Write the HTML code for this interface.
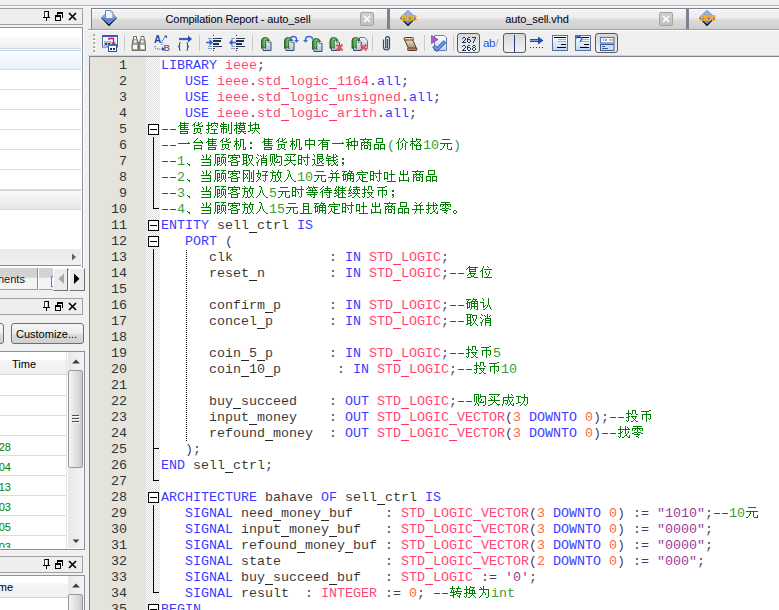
<!DOCTYPE html><html><head><meta charset="utf-8"><style>
html,body{margin:0;padding:0}
body{width:779px;height:610px;overflow:hidden;position:relative;background:#f0f0f0;font-family:"Liberation Sans",sans-serif}
.abs{position:absolute;box-sizing:content-box}
svg.abs{overflow:visible}
.hdr{border:1px solid #a0a0a0;background:#eeeeee}
.lbl{font-size:11px;line-height:13px;white-space:pre}
.ln{position:absolute;font-family:"Liberation Mono",monospace;font-size:13.333px;line-height:16px;white-space:pre;color:#000;margin-top:1px;opacity:0.78}
.ln b{font-weight:normal}
.cm{color:#008000}
.num{color:#000}
.tab{border-top:1px solid #7c8290;border-left:1px solid #7c8290;background:linear-gradient(#ffffff 0,#ffffff 1px,#f4f4f4 1px,#ececec 9px,#dcdcdc 10px,#cfcfcf 20px)}
.closeb{border:1px solid #a4a4a4;border-radius:2px;background:linear-gradient(#d0d0d0,#c0c0c0)}
.btn3{border-right:1px solid #707070;border-bottom:1px solid #707070;border-top:1px solid #fff;border-left:1px solid #fff;background:#ececec}
.pbtn{border:1px solid #707070;border-radius:3px;background:linear-gradient(#f4f4f4 0,#ececec 50%,#dcdcdc 51%,#d0d0d0)}
.thumb{border:1px solid #9a9a9a;border-radius:2px;background:linear-gradient(90deg,#f4f4f4,#dadada 70%,#c8c8c8)}
.pressed{border:1px solid #5a5a5a;border-radius:3px;background:linear-gradient(#d8d8d8,#f2f2f2)}
</style></head><body><div class="abs" style="left:0;top:5px;width:779px;height:1px;background:#b0b0b0"></div><div class="abs" style="left:0;top:6px;width:779px;height:1px;background:#f8f8f8"></div><div class="abs hdr" style="left:-1px;top:8px;width:82px;height:15px"></div><svg class="abs" style="left:42px;top:9px" width="40" height="14" shape-rendering="crispEdges">
<g fill="#000" transform="translate(2,2)">
<rect x="0" y="0" width="1" height="6" fill="#3a4048"/><rect x="1" y="0" width="4" height="1"/><rect x="4" y="0" width="1" height="6"/><rect x="3" y="1" width="1" height="5" fill="#c4c4c4"/><rect x="1" y="1" width="2" height="5" fill="#fff"/><rect x="13" y="3" width="1" height="1"/>
<rect x="-1" y="6" width="7" height="1"/><rect x="2" y="7" width="1" height="3"/>
<rect x="13" y="1" width="6" height="2"/><rect x="18" y="1" width="1" height="6"/>
<rect x="11" y="4" width="6" height="2"/><rect x="11" y="4" width="1" height="6"/><rect x="16" y="4" width="1" height="6"/><rect x="11" y="9" width="6" height="1"/>
</g>
<path d="M27 4l7 7M34 4l-7 7" stroke="#000" stroke-width="1.6" fill="none" shape-rendering="geometricPrecision"/>
</svg><div class="abs" style="left:-1px;top:27px;width:82px;height:241px;border:1px solid #8a909c;background:#fff"></div><div class="abs" style="left:83px;top:27px;width:1px;height:241px;background:#fff"></div><div class="abs" style="left:0;top:37px;width:81px;height:11px;background:linear-gradient(#fafbfc,#eef0f2)"></div><div class="abs" style="left:0;top:48px;width:81px;height:1px;background:#d6d6d6"></div><div class="abs" style="left:0;top:50px;width:81px;height:1px;background:#b4d4fa"></div><div class="abs" style="left:0;top:51px;width:81px;height:18px;background:linear-gradient(#fbfdff,#e8f1fd)"></div><div class="abs" style="left:0;top:69px;width:81px;height:1px;background:#dcdcdc"></div><div class="abs" style="left:0;top:89px;width:81px;height:1px;background:#dcdcdc"></div><div class="abs" style="left:0;top:109px;width:81px;height:1px;background:#dcdcdc"></div><div class="abs" style="left:0;top:129px;width:81px;height:1px;background:#dcdcdc"></div><div class="abs" style="left:0;top:149px;width:81px;height:1px;background:#dcdcdc"></div><div class="abs" style="left:0;top:169px;width:81px;height:1px;background:#dcdcdc"></div><div class="abs" style="left:0;top:189px;width:81px;height:2px;background:#d8d8d8"></div><div class="abs" style="left:0;top:191px;width:81px;height:18px;background:linear-gradient(#f8f9f9,#e6e6e6)"></div><div class="abs" style="left:0;top:209px;width:81px;height:1px;background:#d8d8d8"></div><div class="abs" style="left:0;top:249px;width:81px;height:16px;background:linear-gradient(#eaeaea,#f0f0f0)"></div><div class="abs" style="left:0;top:265px;width:81px;height:1px;background:#8a909c"></div><svg class="abs" style="left:70px;top:252px" width="8" height="10"><path d="M2 1.5L6 5L2 8.5z" fill="#606060"/></svg><div class="abs" style="left:-1px;top:268px;width:38px;height:21px;border:1px solid #a0a4ac;border-top:0;background:linear-gradient(#d0d0d0 0,#d4d4d4 45%,#f2f2f2 46%,#f4f4f4)"></div><div class="abs lbl" style="left:-2px;top:273px;color:#101020">nents</div><div class="abs" style="left:37px;top:268px;width:1px;height:22px;background:#8a8e96"></div><div class="abs" style="left:38px;top:268px;width:1px;height:22px;background:#fafafa"></div><div class="abs" style="left:39px;top:268px;width:14px;height:21px;border-bottom:1px solid #a0a4ac;background:linear-gradient(#d0d0d0 0,#d4d4d4 45%,#f2f2f2 46%,#f4f4f4)"></div><svg class="abs" style="left:50px;top:275px" width="4" height="13" shape-rendering="crispEdges"><path d="M1 1h3v1H2v9h2v1H1z" fill="#5a88d8"/></svg><div class="abs btn3" style="left:53px;top:268px;width:13px;height:21px"></div><svg class="abs" style="left:56px;top:271px" width="10" height="16"><path d="M8 2.5V13L2.5 7.8z" fill="#a8a8a8"/></svg><div class="abs btn3" style="left:69px;top:268px;width:14px;height:21px"></div><svg class="abs" style="left:72px;top:271px" width="10" height="16"><path d="M2 2.5V13L7.5 7.8z" fill="#000"/></svg><div class="abs hdr" style="left:-1px;top:298px;width:82px;height:15px"></div><svg class="abs" style="left:42px;top:299px" width="40" height="14" shape-rendering="crispEdges">
<g fill="#000" transform="translate(2,2)">
<rect x="0" y="0" width="1" height="6" fill="#3a4048"/><rect x="1" y="0" width="4" height="1"/><rect x="4" y="0" width="1" height="6"/><rect x="3" y="1" width="1" height="5" fill="#c4c4c4"/><rect x="1" y="1" width="2" height="5" fill="#fff"/><rect x="13" y="3" width="1" height="1"/>
<rect x="-1" y="6" width="7" height="1"/><rect x="2" y="7" width="1" height="3"/>
<rect x="13" y="1" width="6" height="2"/><rect x="18" y="1" width="1" height="6"/>
<rect x="11" y="4" width="6" height="2"/><rect x="11" y="4" width="1" height="6"/><rect x="16" y="4" width="1" height="6"/><rect x="11" y="9" width="6" height="1"/>
</g>
<path d="M27 4l7 7M34 4l-7 7" stroke="#000" stroke-width="1.6" fill="none" shape-rendering="geometricPrecision"/>
</svg><div class="abs pbtn" style="left:-20px;top:323px;width:22px;height:19px"></div><div class="abs pbtn" style="left:11px;top:323px;width:71px;height:19px"></div><div class="abs lbl" style="left:16px;top:328px;color:#000">Customize...</div><div class="abs" style="left:-1px;top:351px;width:84px;height:197px;border:1px solid #8a909c;background:#fff"></div><div class="abs" style="left:0;top:352px;width:68px;height:22px;background:linear-gradient(#ffffff 0,#ffffff 35%,#f4f6f8 36%,#eef0f2)"></div><div class="abs" style="left:0;top:374px;width:68px;height:1px;background:#d6d6d6"></div><div class="abs lbl" style="left:12px;top:358px;color:#000">Time</div><div class="abs" style="left:0;top:395px;width:66px;height:1px;background:#dcdcdc"></div><div class="abs" style="left:0;top:415px;width:66px;height:1px;background:#dcdcdc"></div><div class="abs" style="left:0;top:435px;width:66px;height:1px;background:#dcdcdc"></div><div class="abs" style="left:0;top:455px;width:66px;height:1px;background:#dcdcdc"></div><div class="abs" style="left:0;top:475px;width:66px;height:1px;background:#dcdcdc"></div><div class="abs" style="left:0;top:495px;width:66px;height:1px;background:#dcdcdc"></div><div class="abs" style="left:0;top:515px;width:66px;height:1px;background:#dcdcdc"></div><div class="abs" style="left:0;top:535px;width:66px;height:1px;background:#dcdcdc"></div><div class="abs" style="left:66px;top:352px;width:1px;height:197px;background:#e4e4e4"></div><div class="abs lbl" style="left:-7px;top:441px;color:#008000;width:18px;text-align:right">28</div><div class="abs lbl" style="left:-7px;top:461px;color:#008000;width:18px;text-align:right">04</div><div class="abs lbl" style="left:-7px;top:481px;color:#008000;width:18px;text-align:right">13</div><div class="abs lbl" style="left:-7px;top:501px;color:#008000;width:18px;text-align:right">03</div><div class="abs lbl" style="left:-7px;top:521px;color:#008000;width:18px;text-align:right">05</div><div class="abs lbl" style="left:-7px;top:541px;color:#008000;width:18px;text-align:right;clip-path:inset(0 0 6px 0)">03</div><div class="abs" style="left:68px;top:352px;width:16px;height:196px;background:linear-gradient(90deg,#e8e8e8,#f4f4f4)"></div><svg class="abs" style="left:68px;top:355px" width="16" height="12"><path d="M4 8.5L8 4.5L12 8.5z" fill="#404040"/></svg><svg class="abs" style="left:68px;top:536px" width="16" height="12"><path d="M4.5 3.5L8 7L11.5 3.5z" fill="#404040"/></svg><div class="abs thumb" style="left:68px;top:370px;width:13px;height:96px"></div><svg class="abs" style="left:71px;top:413px" width="10" height="11" shape-rendering="crispEdges"><path d="M1 2h7v1H1zM1 5h7v1H1zM1 8h7v1H1z" fill="#505050"/><path d="M2 3h7v1H2zM2 6h7v1H2zM2 9h7v1H2z" fill="#fafafa"/></svg><div class="abs hdr" style="left:-1px;top:556px;width:82px;height:15px"></div><svg class="abs" style="left:42px;top:557px" width="40" height="14" shape-rendering="crispEdges">
<g fill="#000" transform="translate(2,2)">
<rect x="0" y="0" width="1" height="6" fill="#3a4048"/><rect x="1" y="0" width="4" height="1"/><rect x="4" y="0" width="1" height="6"/><rect x="3" y="1" width="1" height="5" fill="#c4c4c4"/><rect x="1" y="1" width="2" height="5" fill="#fff"/><rect x="13" y="3" width="1" height="1"/>
<rect x="-1" y="6" width="7" height="1"/><rect x="2" y="7" width="1" height="3"/>
<rect x="13" y="1" width="6" height="2"/><rect x="18" y="1" width="1" height="6"/>
<rect x="11" y="4" width="6" height="2"/><rect x="11" y="4" width="1" height="6"/><rect x="16" y="4" width="1" height="6"/><rect x="11" y="9" width="6" height="1"/>
</g>
<path d="M27 4l7 7M34 4l-7 7" stroke="#000" stroke-width="1.6" fill="none" shape-rendering="geometricPrecision"/>
</svg><div class="abs" style="left:-1px;top:575px;width:84px;height:40px;border:1px solid #8a909c;background:#fff"></div><div class="abs" style="left:0;top:576px;width:68px;height:21px;background:linear-gradient(#ffffff 0,#ffffff 35%,#f4f6f8 36%,#eef0f2)"></div><div class="abs" style="left:0;top:597px;width:68px;height:1px;background:#d6d6d6"></div><div class="abs lbl" style="left:-11px;top:581px;color:#000">Time</div><div class="abs" style="left:68px;top:576px;width:16px;height:40px;background:linear-gradient(90deg,#e8e8e8,#f4f4f4)"></div><svg class="abs" style="left:68px;top:579px" width="16" height="12"><path d="M4 8.5L8 4.5L12 8.5z" fill="#404040"/></svg><div class="abs thumb" style="left:68px;top:594px;width:13px;height:30px"></div><div class="abs" style="left:88px;top:29px;width:691px;height:1px;background:#a0a0a0"></div><div class="abs" style="left:88px;top:30px;width:691px;height:1px;background:#fff"></div><div class="abs tab" style="left:91px;top:8px;width:296px;height:20px"></div><div class="abs" style="left:387px;top:8px;width:2px;height:21px;background:#7c8290"></div><div class="abs lbl" style="left:88px;top:13px;width:300px;text-align:center;color:#000018;letter-spacing:-0.1px">Compilation Report - auto_sell</div><div class="abs closeb" style="left:360px;top:12px;width:12px;height:12px"></div><svg class="abs" style="left:360px;top:12px" width="14" height="14"><path d="M4 4l6 6M10 4l-6 6" stroke="#fff" stroke-width="1.7"/></svg><svg class="abs" style="left:101px;top:10px" width="17" height="17">
<path d="M0 8L8 16.3L16 8z" fill="#000"/>
<path d="M8 0L16 7.5L8 14.5L0 7.5z" fill="#5a88dc"/>
<path d="M8 0L16 7.5L0 7.5z" fill="#88aae8"/><path d="M4.5 0.5h5.5l2 2v6h-7.5z" fill="#eef2fc" stroke="#7088b0" stroke-width="1"/><path d="M10 0.5v2h2" fill="#fff" stroke="#7088b0" stroke-width="0.7"/></svg><div class="abs tab" style="left:389px;top:8px;width:297px;height:20px"></div><div class="abs" style="left:686px;top:8px;width:2px;height:21px;background:#7c8290"></div><div class="abs lbl" style="left:387px;top:13px;width:300px;text-align:center;color:#000018;letter-spacing:-0.1px">auto_sell.vhd</div><div class="abs closeb" style="left:659px;top:12px;width:12px;height:12px"></div><svg class="abs" style="left:659px;top:12px" width="14" height="14"><path d="M4 4l6 6M10 4l-6 6" stroke="#fff" stroke-width="1.7"/></svg><svg class="abs" style="left:400px;top:10px" width="17" height="17">
<path d="M0 8L8 16.3L16 8z" fill="#000"/>
<path d="M8 0L16 7.5L8 14.5L0 7.5z" fill="#5a88dc"/>
<path d="M8 0L16 7.5L0 7.5z" fill="#88aae8"/><text x="8.6" y="11.2" font-family="Liberation Sans" font-size="11" font-weight="bold" fill="#ffb000" text-anchor="middle" letter-spacing="-1.1">abc</text></svg><div class="abs tab" style="left:688px;top:8px;width:112px;height:20px"></div><div class="abs" style="left:800px;top:8px;width:2px;height:21px;background:#7c8290"></div><div class="abs lbl" style="left:-150px;top:13px;width:300px;text-align:center;color:#000018;letter-spacing:-0.1px"></div><svg class="abs" style="left:699px;top:10px" width="17" height="17">
<path d="M0 8L8 16.3L16 8z" fill="#000"/>
<path d="M8 0L16 7.5L8 14.5L0 7.5z" fill="#5a88dc"/>
<path d="M8 0L16 7.5L0 7.5z" fill="#88aae8"/><text x="8.6" y="11.2" font-family="Liberation Sans" font-size="11" font-weight="bold" fill="#ffb000" text-anchor="middle" letter-spacing="-1.1">abc</text></svg><div class="abs" style="left:88px;top:31px;width:691px;height:24px;background:#efefef"></div><div class="abs" style="left:88px;top:55px;width:691px;height:1px;background:#d4d4d4"></div><svg class="abs" style="left:92px;top:33px" width="5" height="20" shape-rendering="crispEdges"><rect x="1" y="1" width="2" height="2" fill="#9c9c9c"/><rect x="1" y="1" width="1" height="1" fill="#d4d4d4"/><rect x="2" y="3" width="2" height="1" fill="#fff"/><rect x="1" y="5" width="2" height="2" fill="#9c9c9c"/><rect x="1" y="5" width="1" height="1" fill="#d4d4d4"/><rect x="2" y="7" width="2" height="1" fill="#fff"/><rect x="1" y="9" width="2" height="2" fill="#9c9c9c"/><rect x="1" y="9" width="1" height="1" fill="#d4d4d4"/><rect x="2" y="11" width="2" height="1" fill="#fff"/><rect x="1" y="13" width="2" height="2" fill="#9c9c9c"/><rect x="1" y="13" width="1" height="1" fill="#d4d4d4"/><rect x="2" y="15" width="2" height="1" fill="#fff"/><rect x="1" y="17" width="2" height="2" fill="#9c9c9c"/><rect x="1" y="17" width="1" height="1" fill="#d4d4d4"/><rect x="2" y="19" width="2" height="1" fill="#fff"/></svg><svg class="abs" style="left:102px;top:35px" width="17" height="17"><rect x="0.5" y="0.5" width="15" height="11.5" fill="#f2f6fc" stroke="#4a68b0"/><rect x="0" y="0" width="16" height="2" fill="#3a58c0"/><rect x="2" y="6" width="7" height="5" fill="#b8b8b8"/><rect x="3" y="8" width="2" height="2" fill="#404040"/><rect x="6" y="8" width="2" height="2" fill="#404040"/><path d="M7 5V3.5H11.5V8" stroke="#d01848" stroke-width="1.3" fill="none"/><path d="M9 7.5h5l-2.5 3z" fill="#d01848"/><rect x="6.5" y="9.5" width="8" height="7" fill="#fff" stroke="#2a4a90"/><rect x="6" y="9" width="9" height="2" fill="#3a68d0"/><rect x="8" y="13" width="2" height="2" fill="#203050"/><rect x="11" y="13" width="2" height="2" fill="#203050"/></svg><div class="abs" style="left:124px;top:35px;width:1px;height:16px;background:#cacaca"></div><svg class="abs" style="left:131px;top:35px" width="17" height="17"><g fill="#a4a49c" stroke="#5a5a52" stroke-width="0.8"><path d="M2.5 1.5h3v2.5l1 1v3l1 1v6.5h-6.5v-6.5l0.5-1v-3l1-1z"/><path d="M10 1.5h3v2.5l1 1v3l0.5 1v6.5h-6.5v-6.5l1-1v-3l1-1z"/></g><g fill="#fcfcf8"><rect x="3" y="2" width="2" height="2"/><rect x="10.5" y="2" width="2" height="2"/><rect x="2" y="10" width="4" height="4"/><rect x="9.5" y="10" width="4" height="4"/><rect x="3" y="5.5" width="2.5" height="2"/><rect x="10" y="5.5" width="2.5" height="2"/></g><rect x="7" y="7" width="2" height="2" fill="#707068"/></svg><svg class="abs" style="left:154px;top:35px" width="17" height="17"><text x="0" y="8" font-family="Liberation Sans" font-weight="bold" font-size="10" fill="#1a48a8">A</text><text x="9.5" y="16" font-family="Liberation Sans" font-weight="bold" font-size="9" fill="#707070">B</text><path d="M1 11Q1 14 4 14H8" stroke="#2050c8" stroke-width="1.1" stroke-dasharray="1 1" fill="none"/><path d="M8 12l3 2l-3 2z" fill="#2050c8"/><path d="M8 10L8 6L11 2" stroke="#2050c8" stroke-width="1.1" stroke-dasharray="1 1" fill="none"/><path d="M10 0.5h3v3z" fill="#2050c8"/></svg><svg class="abs" style="left:177px;top:35px" width="17" height="17"><path d="M2 4h10" stroke="#3a60d0" stroke-width="2.2"/><path d="M11 0.5l4 3.5l-4 3.5z" fill="#2a48b8"/><path d="M3.5 7.5q-1 0-1 1.2v2l-1 0.8l1 0.8v2q0 1.2 1 1.2M9.5 7.5q1 0 1 1.2v2l1 0.8l-1 0.8v2q0 1.2-1 1.2" stroke="#3a4a68" stroke-width="1.1" fill="none"/></svg><div class="abs" style="left:199px;top:35px;width:1px;height:16px;background:#cacaca"></div><svg class="abs" style="left:206px;top:35px" width="17" height="17"><path d="M7 3.5h9M7 11.5h9M7 13.5h2" stroke="#2a3a58" stroke-width="1"/><path d="M7 6h8M7 9h6" stroke="#203048" stroke-width="2"/><path d="M2 3.5h4M2 11.5h4M2 13.5h4" stroke="#90a0c0" stroke-width="1"/><rect x="7" y="0" width="1" height="1" fill="#2a3a58"/><rect x="7" y="15" width="1" height="1" fill="#2a3a58"/><path d="M0 7.5h4.5" stroke="#3060d0" stroke-width="1.5"/><path d="M7 7.5l-3.5-3.5v7z" fill="#3060d0"/></svg><svg class="abs" style="left:229px;top:35px" width="17" height="17"><path d="M7 3.5h9M7 11.5h9M7 13.5h2" stroke="#2a3a58" stroke-width="1"/><path d="M7 6h8M7 9h6" stroke="#203048" stroke-width="2"/><path d="M2 3.5h4M2 11.5h4M2 13.5h4" stroke="#90a0c0" stroke-width="1"/><rect x="7" y="0" width="1" height="1" fill="#2a3a58"/><rect x="7" y="15" width="1" height="1" fill="#2a3a58"/><path d="M7 7.5H2.5" stroke="#3060d0" stroke-width="1.5"/><path d="M0 7.5l3.5-3.5v7z" fill="#3060d0"/></svg><div class="abs" style="left:252px;top:35px;width:1px;height:16px;background:#cacaca"></div><svg width="0" height="0" style="position:absolute"><defs><linearGradient id="gdoc" x1="0" y1="0" x2="0" y2="1"><stop offset="0" stop-color="#f4f8ff"/><stop offset="1" stop-color="#aebedc"/></linearGradient><linearGradient id="ggrn" x1="0" y1="0" x2="1" y2="0"><stop offset="0" stop-color="#2a7a2a"/><stop offset="0.5" stop-color="#8ad08a"/><stop offset="1" stop-color="#2a7a2a"/></linearGradient></defs></svg><svg class="abs" style="left:258px;top:35px" width="17" height="17"><g transform="translate(0.5,0)"><path d="M4.5 4.5H9.5L12.5 7.5V15.5H4.5Z" fill="url(#gdoc)" stroke="#3a4a68" stroke-width="1"/><path d="M9.5 4.5V7.5H12.5" fill="#fff" stroke="#3a4a68" stroke-width="0.6"/><path d="M3 13.5V6Q3 2.5 6.5 2.5Q10 2.5 11 5.5L9.5 6Q8.5 4.8 7.2 5.2V13.5L5.2 11.5Z" fill="url(#ggrn)" stroke="#1e5a1e" stroke-width="0.9"/></g></svg><svg class="abs" style="left:281px;top:35px" width="17" height="17"><g transform="translate(0.5,0)"><path d="M4.5 4.5H9.5L12.5 7.5V15.5H4.5Z" fill="url(#gdoc)" stroke="#3a4a68" stroke-width="1"/><path d="M9.5 4.5V7.5H12.5" fill="#fff" stroke="#3a4a68" stroke-width="0.6"/><path d="M3 13.5V6Q3 2.5 6.5 2.5Q10 2.5 11 5.5L9.5 6Q8.5 4.8 7.2 5.2V13.5L5.2 11.5Z" fill="url(#ggrn)" stroke="#1e5a1e" stroke-width="0.9"/></g><path d="M9 5.5Q9 1.5 12.5 1.5Q16 1.5 15.5 5" stroke="#3a6ad8" stroke-width="1.5" fill="none"/><path d="M13 5h5l-2.5 2.8z" fill="#3a6ad8"/></svg><svg class="abs" style="left:304px;top:35px" width="17" height="17"><g transform="translate(5.5,1)"><path d="M4.5 4.5H9.5L12.5 7.5V15.5H4.5Z" fill="url(#gdoc)" stroke="#3a4a68" stroke-width="1"/><path d="M9.5 4.5V7.5H12.5" fill="#fff" stroke="#3a4a68" stroke-width="0.6"/><path d="M3 13.5V6Q3 2.5 6.5 2.5Q10 2.5 11 5.5L9.5 6Q8.5 4.8 7.2 5.2V13.5L5.2 11.5Z" fill="url(#ggrn)" stroke="#1e5a1e" stroke-width="0.9"/></g><path d="M8.5 4.5Q8.5 1.5 5 1.5Q1.5 1.5 1.5 5" stroke="#3a6ad8" stroke-width="1.5" fill="none"/><path d="M-1 5h5l-2.5 2.8z" fill="#3a6ad8"/></svg><svg class="abs" style="left:327px;top:35px" width="17" height="17"><g transform="translate(0,0)"><path d="M4.5 4.5H9.5L12.5 7.5V15.5H4.5Z" fill="url(#gdoc)" stroke="#3a4a68" stroke-width="1"/><path d="M9.5 4.5V7.5H12.5" fill="#fff" stroke="#3a4a68" stroke-width="0.6"/><path d="M3 13.5V6Q3 2.5 6.5 2.5Q10 2.5 11 5.5L9.5 6Q8.5 4.8 7.2 5.2V13.5L5.2 11.5Z" fill="url(#ggrn)" stroke="#1e5a1e" stroke-width="0.9"/></g><g transform="translate(0,0)"><path d="M9.5 9.5l6 6M15.5 9.5l-6 6" stroke="#f05050" stroke-width="2.2"/></g></svg><svg class="abs" style="left:350px;top:35px" width="17" height="17"><g transform="translate(5,-2)"><path d="M4.5 4.5H9.5L12.5 7.5V15.5H4.5Z" fill="url(#gdoc)" stroke="#6a7a98" stroke-width="1"/></g><g transform="translate(-1,0)"><path d="M4.5 4.5H9.5L12.5 7.5V15.5H4.5Z" fill="url(#gdoc)" stroke="#3a4a68" stroke-width="1"/><path d="M9.5 4.5V7.5H12.5" fill="#fff" stroke="#3a4a68" stroke-width="0.6"/><path d="M3 13.5V6Q3 2.5 6.5 2.5Q10 2.5 11 5.5L9.5 6Q8.5 4.8 7.2 5.2V13.5L5.2 11.5Z" fill="url(#ggrn)" stroke="#1e5a1e" stroke-width="0.9"/></g><g transform="translate(1,0)"><path d="M9.5 9.5l6 6M15.5 9.5l-6 6" stroke="#f05050" stroke-width="2.2"/></g></svg><div class="abs" style="left:372px;top:35px;width:1px;height:16px;background:#cacaca"></div><svg class="abs" style="left:379px;top:35px" width="17" height="17"><path d="M4.5 4.5V12A3 3 0 0 0 10.5 12V3.5A1.9 1.9 0 0 0 6.7 3.5V12A0.9 0.9 0 0 0 8.5 12V4" stroke="#284a70" stroke-width="1.2" fill="none"/></svg><svg width="0" height="0" style="position:absolute"><defs><linearGradient id="gscr" x1="0" y1="0" x2="0" y2="1"><stop offset="0" stop-color="#efe6cc"/><stop offset="1" stop-color="#a08e70"/></linearGradient></defs></svg><svg class="abs" style="left:402px;top:36px" width="17" height="17"><path d="M2.5 3.5L10.5 3.5L14.5 12.5H6.5Z" fill="url(#gscr)" stroke="#6a3020" stroke-width="1"/><rect x="2" y="1.5" width="9.5" height="2.5" rx="1.2" fill="#e8dcc0" stroke="#6a3020" stroke-width="1"/><rect x="5.5" y="12" width="9.5" height="2.5" rx="1.2" fill="#a89070" stroke="#6a3020" stroke-width="1"/></svg><div class="abs" style="left:424px;top:35px;width:1px;height:16px;background:#cacaca"></div><svg class="abs" style="left:431px;top:35px" width="17" height="17"><path d="M3.5 0.5H13L15.5 3V15.5H3.5Z" fill="url(#gdoc2)" stroke="#6a80a8" stroke-width="1"/><path d="M0.5 0.5L7 4.5L0.5 8.5Z" fill="#c050d0" stroke="#404878" stroke-width="0.6"/><path d="M2.5 11L6 14.5L14 6.5" stroke="#284a98" stroke-width="3.6" fill="none"/><path d="M2.5 11L6 14.5L14 6.5" stroke="#6a9af0" stroke-width="2.2" fill="none"/></svg><div class="abs" style="left:453px;top:35px;width:1px;height:16px;background:#cacaca"></div><div class="abs pressed" style="left:457px;top:33px;width:21px;height:18px"></div><svg class="abs" style="left:0;top:0" width="779" height="60" shape-rendering="crispEdges"><path d="M463 37h1v1h-1zM464 37h1v1h-1zM462 38h1v1h-1zM465 38h1v1h-1zM465 39h1v1h-1zM464 40h1v1h-1zM463 41h1v1h-1zM462 42h1v1h-1zM463 42h1v1h-1zM464 42h1v1h-1zM465 42h1v1h-1zM468 37h1v1h-1zM469 37h1v1h-1zM467 38h1v1h-1zM467 39h1v1h-1zM468 39h1v1h-1zM469 39h1v1h-1zM467 40h1v1h-1zM470 40h1v1h-1zM467 41h1v1h-1zM470 41h1v1h-1zM468 42h1v1h-1zM469 42h1v1h-1zM472 37h1v1h-1zM473 37h1v1h-1zM474 37h1v1h-1zM475 37h1v1h-1zM475 38h1v1h-1zM474 39h1v1h-1zM474 40h1v1h-1zM473 41h1v1h-1zM473 42h1v1h-1zM463 45h1v1h-1zM464 45h1v1h-1zM462 46h1v1h-1zM465 46h1v1h-1zM465 47h1v1h-1zM464 48h1v1h-1zM463 49h1v1h-1zM462 50h1v1h-1zM463 50h1v1h-1zM464 50h1v1h-1zM465 50h1v1h-1zM468 45h1v1h-1zM469 45h1v1h-1zM467 46h1v1h-1zM467 47h1v1h-1zM468 47h1v1h-1zM469 47h1v1h-1zM467 48h1v1h-1zM470 48h1v1h-1zM467 49h1v1h-1zM470 49h1v1h-1zM468 50h1v1h-1zM469 50h1v1h-1zM473 45h1v1h-1zM474 45h1v1h-1zM472 46h1v1h-1zM475 46h1v1h-1zM473 47h1v1h-1zM474 47h1v1h-1zM472 48h1v1h-1zM475 48h1v1h-1zM472 49h1v1h-1zM475 49h1v1h-1zM473 50h1v1h-1zM474 50h1v1h-1z" fill="#18386a"/></svg><div class="abs" style="left:483px;top:37px;font:11.5px 'Liberation Sans';color:#3050d0;letter-spacing:-0.3px">ab<span style="color:#a0a8b0">/</span></div><div class="abs pressed" style="left:503px;top:33px;width:21px;height:18px"></div><div class="abs" style="left:514px;top:35px;width:1px;height:17px;background:#204080"></div><svg class="abs" style="left:528px;top:35px" width="17" height="17"><path d="M2 5.5h9" stroke="#2a48b8" stroke-width="3"/><path d="M2 5.5h9" stroke="#7aa0f0" stroke-width="1"/><path d="M10 1.5l5.5 4l-5.5 4z" fill="#2a48b8"/><path d="M2 12.5h13" stroke="#203a68" stroke-dasharray="1 2" stroke-width="1.2"/></svg><svg width="0" height="0" style="position:absolute"><defs><linearGradient id="gdoc2" x1="0" y1="0" x2="0" y2="1"><stop offset="0" stop-color="#ffffff"/><stop offset="1" stop-color="#c4d4f0"/></linearGradient></defs></svg><svg class="abs" style="left:552px;top:35px" width="17" height="17"><rect x="0.5" y="0.5" width="15" height="15" fill="url(#gdoc2)" stroke="#5a7098"/><path d="M2 2.5h3M5 2.5h9M9 12.5h5M5 15.5h0" stroke="#000" stroke-width="1"/><path d="M9 9.5h5M5 12.5h9" stroke="#000" stroke-width="1"/><path d="M6 4.5h8M6 6.5h8" stroke="#a8b0a8" stroke-width="1"/></svg><svg class="abs" style="left:575px;top:35px" width="17" height="17"><rect x="0.5" y="0.5" width="15" height="15" fill="url(#gdoc2)" stroke="#5a7098"/><path d="M2 2.5h3M5 2.5h9M9 12.5h5M5 15.5h0" stroke="#000" stroke-width="1"/><path d="M9 9.5h5M5 12.5h9" stroke="#000" stroke-width="1"/><path d="M6 4.5h8M6 6.5h8" stroke="#a8b0a8" stroke-width="1"/><path d="M1.5 2.5Q4 0.5 6 2.5Q7.5 4.5 5 7" stroke="#3a68d0" stroke-width="1.4" fill="none"/><path d="M0 1l3.5 0.2l-2 3z" fill="#3a68d0"/></svg><div class="abs pressed" style="left:595px;top:33px;width:21px;height:18px"></div><svg class="abs" style="left:600px;top:37px" width="17" height="17"><rect x="0.5" y="7.5" width="13.5" height="6" fill="#d0ddf4" stroke="#3a5a98"/><rect x="0.5" y="0.5" width="13.5" height="5.5" fill="#fff" stroke="#4a78d0" stroke-width="1.2"/><path d="M3 3h1M5 3h2" stroke="#203050" stroke-width="1.2"/><path d="M9 3h4" stroke="#f08a10" stroke-width="1.3"/><path d="M2 9.5h3M2 11.5h6M2 13.5h9" stroke="#405c88" stroke-width="1"/></svg><div class="abs" style="left:89px;top:56px;width:700px;height:1px;background:#7c8290"></div><div class="abs" style="left:89px;top:56px;width:1px;height:560px;background:#7c8290"></div><div class="abs" style="left:90px;top:57px;width:56px;height:560px;background:#e4e3dc"></div><svg class="abs" style="left:146px;top:57px" width="14" height="553" shape-rendering="crispEdges"><defs><pattern id="chk" width="2" height="2" patternUnits="userSpaceOnUse"><rect width="2" height="2" fill="#fff"/><rect x="1" y="0" width="1" height="1" fill="#dcdcdc"/><rect x="0" y="1" width="1" height="1" fill="#dcdcdc"/></pattern></defs><rect width="14" height="553" fill="url(#chk)"/></svg><div class="abs" style="left:160px;top:57px;width:619px;height:553px;background:#fff"></div><svg class="abs" style="left:0;top:0" width="779" height="610" shape-rendering="crispEdges"><rect x="148.5" y="124.5" width="10" height="10" fill="#fff" stroke="#000"/><path d="M150 129.5h7" stroke="#000"/><path d="M153.5 137V209" stroke="#000"/><path d="M153 208.5h6" stroke="#000"/><rect x="148.5" y="220.5" width="10" height="10" fill="#fff" stroke="#000"/><path d="M150 225.5h7" stroke="#000"/><rect x="148.5" y="236.5" width="10" height="10" fill="#fff" stroke="#000"/><path d="M150 241.5h7" stroke="#000"/><path d="M153.5 249V481" stroke="#000"/><path d="M153 448.5h6" stroke="#000"/><path d="M153 480.5h6" stroke="#000"/><rect x="148.5" y="492.5" width="10" height="10" fill="#fff" stroke="#000"/><path d="M150 497.5h7" stroke="#000"/><path d="M153.5 505V593" stroke="#000"/><path d="M153 592.5h6" stroke="#000"/><rect x="148.5" y="604.5" width="10" height="10" fill="#fff" stroke="#000"/><path d="M150 609.5h7" stroke="#000"/><path d="M186.5 250V441" stroke="#000" stroke-dasharray="1 1"/></svg><div class="ln num" style="top:57px;left:119px">1</div><div class="ln num" style="top:73px;left:119px">2</div><div class="ln num" style="top:89px;left:119px">3</div><div class="ln num" style="top:105px;left:119px">4</div><div class="ln num" style="top:121px;left:119px">5</div><div class="ln num" style="top:137px;left:119px">6</div><div class="ln num" style="top:153px;left:119px">7</div><div class="ln num" style="top:169px;left:119px">8</div><div class="ln num" style="top:185px;left:119px">9</div><div class="ln num" style="top:201px;left:111px">10</div><div class="ln num" style="top:217px;left:111px">11</div><div class="ln num" style="top:233px;left:111px">12</div><div class="ln num" style="top:249px;left:111px">13</div><div class="ln num" style="top:265px;left:111px">14</div><div class="ln num" style="top:281px;left:111px">15</div><div class="ln num" style="top:297px;left:111px">16</div><div class="ln num" style="top:313px;left:111px">17</div><div class="ln num" style="top:329px;left:111px">18</div><div class="ln num" style="top:345px;left:111px">19</div><div class="ln num" style="top:361px;left:111px">20</div><div class="ln num" style="top:377px;left:111px">21</div><div class="ln num" style="top:393px;left:111px">22</div><div class="ln num" style="top:409px;left:111px">23</div><div class="ln num" style="top:425px;left:111px">24</div><div class="ln num" style="top:441px;left:111px">25</div><div class="ln num" style="top:457px;left:111px">26</div><div class="ln num" style="top:473px;left:111px">27</div><div class="ln num" style="top:489px;left:111px">28</div><div class="ln num" style="top:505px;left:111px">29</div><div class="ln num" style="top:521px;left:111px">30</div><div class="ln num" style="top:537px;left:111px">31</div><div class="ln num" style="top:553px;left:111px">32</div><div class="ln num" style="top:569px;left:111px">33</div><div class="ln num" style="top:585px;left:111px">34</div><div class="ln num" style="top:601px;left:111px">35</div><div class="ln" style="top:57px;left:161px"><b style="color:#0000ff">LIBRARY</b> <b style="color:#ff1050">ieee</b><b style="color:#200030">;</b></div><div class="ln" style="top:73px;left:161px">   <b style="color:#0000ff">USE</b> <b style="color:#ff1050">ieee</b><b style="color:#200030">.</b><b style="color:#ff1050">std logic 1164</b><b style="color:#200030">.</b><b style="color:#0000ff">all</b><b style="color:#200030">;</b></div><div class="ln" style="top:89px;left:161px">   <b style="color:#0000ff">USE</b> <b style="color:#ff1050">ieee</b><b style="color:#200030">.</b><b style="color:#ff1050">std logic unsigned</b><b style="color:#200030">.</b><b style="color:#0000ff">all</b><b style="color:#200030">;</b></div><div class="ln" style="top:105px;left:161px">   <b style="color:#0000ff">USE</b> <b style="color:#ff1050">ieee</b><b style="color:#200030">.</b><b style="color:#ff1050">std logic arith</b><b style="color:#200030">.</b><b style="color:#0000ff">all</b><b style="color:#200030">;</b></div><div class="ln cm" style="top:121px;left:161px">  </div><div class="ln cm" style="top:137px;left:161px">  </div><div class="ln cm" style="top:137px;left:387px">(</div><div class="ln cm" style="top:137px;left:423px">10</div><div class="ln cm" style="top:137px;left:453px">)</div><div class="ln cm" style="top:153px;left:161px">  1</div><div class="ln cm" style="top:169px;left:161px">  2</div><div class="ln cm" style="top:169px;left:297px">10</div><div class="ln cm" style="top:185px;left:161px">  3</div><div class="ln cm" style="top:185px;left:269px">5</div><div class="ln cm" style="top:201px;left:161px">  4</div><div class="ln cm" style="top:201px;left:269px">15</div><div class="ln" style="top:217px;left:161px"><b style="color:#0000ff">ENTITY</b> <b style="color:#000000">sell ctrl</b> <b style="color:#0000ff">IS</b></div><div class="ln" style="top:233px;left:161px">   <b style="color:#0000ff">PORT</b> <b style="color:#200030">(</b></div><div class="ln" style="top:249px;left:161px">      <b style="color:#000000">clk</b>            <b style="color:#200030">:</b> <b style="color:#0000ff">IN</b> <b style="color:#ff1050">STD LOGIC</b><b style="color:#200030">;</b></div><div class="ln" style="top:265px;left:161px">      <b style="color:#000000">reset n</b>        <b style="color:#200030">:</b> <b style="color:#0000ff">IN</b> <b style="color:#ff1050">STD LOGIC</b><b style="color:#200030">;</b></div><div class="ln cm" style="top:265px;left:449px">  </div><div class="ln" style="top:297px;left:161px">      <b style="color:#000000">confirm p</b>      <b style="color:#200030">:</b> <b style="color:#0000ff">IN</b> <b style="color:#ff1050">STD LOGIC</b><b style="color:#200030">;</b></div><div class="ln cm" style="top:297px;left:449px">  </div><div class="ln" style="top:313px;left:161px">      <b style="color:#000000">concel p</b>       <b style="color:#200030">:</b> <b style="color:#0000ff">IN</b> <b style="color:#ff1050">STD LOGIC</b><b style="color:#200030">;</b></div><div class="ln cm" style="top:313px;left:449px">  </div><div class="ln" style="top:345px;left:161px">      <b style="color:#000000">coin 5 p</b>       <b style="color:#200030">:</b> <b style="color:#0000ff">IN</b> <b style="color:#ff1050">STD LOGIC</b><b style="color:#200030">;</b></div><div class="ln cm" style="top:345px;left:449px">  </div><div class="ln cm" style="top:345px;left:493px">5</div><div class="ln" style="top:361px;left:161px">      <b style="color:#000000">coin 10 p</b>       <b style="color:#200030">:</b> <b style="color:#0000ff">IN</b> <b style="color:#ff1050">STD LOGIC</b><b style="color:#200030">;</b></div><div class="ln cm" style="top:361px;left:457px">  </div><div class="ln cm" style="top:361px;left:501px">10</div><div class="ln" style="top:393px;left:161px">      <b style="color:#000000">buy succeed</b>    <b style="color:#200030">:</b> <b style="color:#0000ff">OUT</b> <b style="color:#ff1050">STD LOGIC</b><b style="color:#200030">;</b></div><div class="ln cm" style="top:393px;left:457px">  </div><div class="ln" style="top:409px;left:161px">      <b style="color:#000000">input money</b>    <b style="color:#200030">:</b> <b style="color:#0000ff">OUT</b> <b style="color:#ff1050">STD LOGIC VECTOR</b><b style="color:#200030">(</b><b style="color:#ff4000">3</b> <b style="color:#0000ff">DOWNTO</b> <b style="color:#ff4000">0</b><b style="color:#200030">)</b><b style="color:#200030">;</b></div><div class="ln cm" style="top:409px;left:609px">  </div><div class="ln" style="top:425px;left:161px">      <b style="color:#000000">refound money</b>  <b style="color:#200030">:</b> <b style="color:#0000ff">OUT</b> <b style="color:#ff1050">STD LOGIC VECTOR</b><b style="color:#200030">(</b><b style="color:#ff4000">3</b> <b style="color:#0000ff">DOWNTO</b> <b style="color:#ff4000">0</b><b style="color:#200030">)</b></div><div class="ln cm" style="top:425px;left:601px">  </div><div class="ln" style="top:441px;left:161px">   <b style="color:#200030">)</b><b style="color:#200030">;</b></div><div class="ln" style="top:457px;left:161px"><b style="color:#0000ff">END</b> <b style="color:#000000">sell ctrl</b><b style="color:#200030">;</b></div><div class="ln" style="top:489px;left:161px"><b style="color:#0000ff">ARCHITECTURE</b> <b style="color:#000000">bahave</b> <b style="color:#0000ff">OF</b> <b style="color:#000000">sell ctrl</b> <b style="color:#0000ff">IS</b></div><div class="ln" style="top:505px;left:161px">   <b style="color:#0000ff">SIGNAL</b> <b style="color:#000000">need money buf</b>    <b style="color:#200030">:</b> <b style="color:#ff1050">STD LOGIC VECTOR</b><b style="color:#200030">(</b><b style="color:#ff4000">3</b> <b style="color:#0000ff">DOWNTO</b> <b style="color:#ff4000">0</b><b style="color:#200030">)</b> <b style="color:#200030">:</b><b style="color:#200030">=</b> <b style="color:#800080">&quot;1010&quot;</b><b style="color:#200030">;</b></div><div class="ln cm" style="top:505px;left:713px">  10</div><div class="ln" style="top:521px;left:161px">   <b style="color:#0000ff">SIGNAL</b> <b style="color:#000000">input money buf</b>   <b style="color:#200030">:</b> <b style="color:#ff1050">STD LOGIC VECTOR</b><b style="color:#200030">(</b><b style="color:#ff4000">3</b> <b style="color:#0000ff">DOWNTO</b> <b style="color:#ff4000">0</b><b style="color:#200030">)</b> <b style="color:#200030">:</b><b style="color:#200030">=</b> <b style="color:#800080">&quot;0000&quot;</b><b style="color:#200030">;</b></div><div class="ln" style="top:537px;left:161px">   <b style="color:#0000ff">SIGNAL</b> <b style="color:#000000">refound money buf</b> <b style="color:#200030">:</b> <b style="color:#ff1050">STD LOGIC VECTOR</b><b style="color:#200030">(</b><b style="color:#ff4000">3</b> <b style="color:#0000ff">DOWNTO</b> <b style="color:#ff4000">0</b><b style="color:#200030">)</b> <b style="color:#200030">:</b><b style="color:#200030">=</b> <b style="color:#800080">&quot;0000&quot;</b><b style="color:#200030">;</b></div><div class="ln" style="top:553px;left:161px">   <b style="color:#0000ff">SIGNAL</b> <b style="color:#000000">state</b>             <b style="color:#200030">:</b> <b style="color:#ff1050">STD LOGIC VECTOR</b><b style="color:#200030">(</b><b style="color:#ff4000">2</b> <b style="color:#0000ff">DOWNTO</b> <b style="color:#ff4000">0</b><b style="color:#200030">)</b> <b style="color:#200030">:</b><b style="color:#200030">=</b> <b style="color:#800080">&quot;000&quot;</b><b style="color:#200030">;</b></div><div class="ln" style="top:569px;left:161px">   <b style="color:#0000ff">SIGNAL</b> <b style="color:#000000">buy succeed buf</b>   <b style="color:#200030">:</b> <b style="color:#ff1050">STD LOGIC</b> <b style="color:#200030">:</b><b style="color:#200030">=</b> <b style="color:#800080">&#x27;0&#x27;</b><b style="color:#200030">;</b></div><div class="ln" style="top:585px;left:161px">   <b style="color:#0000ff">SIGNAL</b> <b style="color:#000000">result</b>  <b style="color:#200030">:</b> <b style="color:#ff1050">INTEGER</b> <b style="color:#200030">:</b><b style="color:#200030">=</b> <b style="color:#ff4000">0</b><b style="color:#200030">;</b> </div><div class="ln cm" style="top:585px;left:433px">  </div><div class="ln cm" style="top:585px;left:491px">int</div><div class="ln" style="top:601px;left:161px"><b style="color:#0000ff">BEGIN</b></div><svg class="abs" style="left:0;top:0" width="779" height="610" fill="#008000" shape-rendering="crispEdges"><defs><path id="g3001" d="M3 11h1v1h-1zM4 12h2v1h-2zM5 13h1v1h-1z"/><path id="g3002" d="M4 10h2v1h-2zM3 11h1v1h-1zM6 11h1v1h-1zM3 12h1v1h-1zM6 12h1v1h-1zM4 13h2v1h-2z"/><path id="g4e00" d="M10 6h1v1h-1zM0 7h12v1h-12z"/><path id="g4e14" d="M3 3h6v1h-6zM3 4h1v1h-1zM8 4h1v1h-1zM3 5h1v1h-1zM8 5h1v1h-1zM3 6h6v1h-6zM3 7h1v1h-1zM8 7h1v1h-1zM3 8h1v1h-1zM8 8h1v1h-1zM3 9h6v1h-6zM3 10h1v1h-1zM8 10h1v1h-1zM3 11h1v1h-1zM8 11h1v1h-1zM3 12h1v1h-1zM8 12h1v1h-1zM0 13h12v1h-12z"/><path id="g4e2d" d="M5 2h1v1h-1zM5 3h1v1h-1zM1 4h10v1h-10zM1 5h1v1h-1zM5 5h1v1h-1zM10 5h1v1h-1zM1 6h1v1h-1zM5 6h1v1h-1zM10 6h1v1h-1zM1 7h1v1h-1zM5 7h1v1h-1zM10 7h1v1h-1zM1 8h10v1h-10zM1 9h1v1h-1zM5 9h1v1h-1zM10 9h1v1h-1zM5 10h1v1h-1zM5 11h1v1h-1zM5 12h1v1h-1zM5 13h1v1h-1z"/><path id="g4e3a" d="M5 2h1v1h-1zM2 3h1v1h-1zM5 3h1v1h-1zM3 4h1v1h-1zM5 4h1v1h-1zM1 5h10v1h-10zM5 6h1v1h-1zM10 6h1v1h-1zM5 7h1v1h-1zM10 7h1v1h-1zM5 8h2v1h-2zM10 8h1v1h-1zM4 9h1v1h-1zM7 9h1v1h-1zM10 9h1v1h-1zM4 10h1v1h-1zM7 10h1v1h-1zM10 10h1v1h-1zM3 11h1v1h-1zM10 11h1v1h-1zM2 12h1v1h-1zM10 12h1v1h-1zM1 13h1v1h-1zM8 13h2v1h-2z"/><path id="g4e70" d="M1 2h11v1h-11zM10 3h1v1h-1zM3 4h1v1h-1zM6 4h1v1h-1zM9 4h1v1h-1zM4 5h1v1h-1zM6 5h1v1h-1zM2 6h1v1h-1zM6 6h1v1h-1zM3 7h1v1h-1zM6 7h1v1h-1zM0 8h12v1h-12zM6 9h1v1h-1zM5 10h1v1h-1zM7 10h1v1h-1zM4 11h1v1h-1zM8 11h1v1h-1zM2 12h2v1h-2zM9 12h3v1h-3zM0 13h2v1h-2zM10 13h1v1h-1z"/><path id="g4ef7" d="M3 2h1v1h-1zM7 2h1v1h-1zM3 3h1v1h-1zM7 3h1v1h-1zM2 4h1v1h-1zM6 4h1v1h-1zM8 4h1v1h-1zM2 5h1v1h-1zM5 5h1v1h-1zM9 5h1v1h-1zM1 6h2v1h-2zM4 6h1v1h-1zM10 6h2v1h-2zM0 7h1v1h-1zM2 7h1v1h-1zM6 7h1v1h-1zM9 7h1v1h-1zM2 8h1v1h-1zM6 8h1v1h-1zM9 8h1v1h-1zM2 9h1v1h-1zM6 9h1v1h-1zM9 9h1v1h-1zM2 10h1v1h-1zM6 10h1v1h-1zM9 10h1v1h-1zM2 11h1v1h-1zM6 11h1v1h-1zM9 11h1v1h-1zM2 12h1v1h-1zM5 12h1v1h-1zM9 12h1v1h-1zM2 13h1v1h-1zM4 13h1v1h-1zM9 13h1v1h-1z"/><path id="g4f4d" d="M3 2h1v1h-1zM7 2h1v1h-1zM3 3h1v1h-1zM8 3h1v1h-1zM2 4h1v1h-1zM2 5h1v1h-1zM4 5h8v1h-8zM1 6h2v1h-2zM0 7h1v1h-1zM2 7h1v1h-1zM5 7h1v1h-1zM9 7h1v1h-1zM2 8h1v1h-1zM5 8h1v1h-1zM9 8h1v1h-1zM2 9h1v1h-1zM6 9h1v1h-1zM9 9h1v1h-1zM2 10h1v1h-1zM6 10h1v1h-1zM8 10h1v1h-1zM2 11h1v1h-1zM8 11h1v1h-1zM2 12h1v1h-1zM7 12h1v1h-1zM2 13h1v1h-1zM4 13h8v1h-8z"/><path id="g5143" d="M2 3h8v1h-8zM0 7h12v1h-12zM4 8h1v1h-1zM7 8h1v1h-1zM4 9h1v1h-1zM7 9h1v1h-1zM3 10h1v1h-1zM7 10h1v1h-1zM3 11h1v1h-1zM7 11h1v1h-1zM11 11h1v1h-1zM2 12h1v1h-1zM7 12h1v1h-1zM11 12h1v1h-1zM0 13h2v1h-2zM8 13h4v1h-4z"/><path id="g5165" d="M3 2h2v1h-2zM5 3h1v1h-1zM5 4h1v1h-1zM5 5h1v1h-1zM4 6h1v1h-1zM6 6h1v1h-1zM4 7h1v1h-1zM6 7h1v1h-1zM4 8h1v1h-1zM6 8h1v1h-1zM3 9h1v1h-1zM7 9h1v1h-1zM3 10h1v1h-1zM7 10h1v1h-1zM2 11h1v1h-1zM8 11h1v1h-1zM1 12h1v1h-1zM9 12h1v1h-1zM0 13h1v1h-1zM10 13h2v1h-2z"/><path id="g51fa" d="M5 2h1v1h-1zM2 3h1v1h-1zM5 3h1v1h-1zM9 3h1v1h-1zM2 4h1v1h-1zM5 4h1v1h-1zM9 4h1v1h-1zM2 5h1v1h-1zM5 5h1v1h-1zM9 5h1v1h-1zM2 6h8v1h-8zM5 7h1v1h-1zM5 8h1v1h-1zM1 9h1v1h-1zM5 9h1v1h-1zM10 9h1v1h-1zM1 10h1v1h-1zM5 10h1v1h-1zM10 10h1v1h-1zM1 11h1v1h-1zM5 11h1v1h-1zM10 11h1v1h-1zM1 12h10v1h-10zM1 13h1v1h-1zM10 13h1v1h-1z"/><path id="g521a" d="M1 2h7v1h-7zM11 2h1v1h-1zM1 3h1v1h-1zM7 3h1v1h-1zM11 3h1v1h-1zM1 4h1v1h-1zM7 4h1v1h-1zM9 4h1v1h-1zM11 4h1v1h-1zM1 5h2v1h-2zM5 5h1v1h-1zM7 5h1v1h-1zM9 5h1v1h-1zM11 5h1v1h-1zM1 6h1v1h-1zM3 6h1v1h-1zM5 6h1v1h-1zM7 6h1v1h-1zM9 6h1v1h-1zM11 6h1v1h-1zM1 7h1v1h-1zM4 7h1v1h-1zM7 7h1v1h-1zM9 7h1v1h-1zM11 7h1v1h-1zM1 8h1v1h-1zM4 8h1v1h-1zM7 8h1v1h-1zM9 8h1v1h-1zM11 8h1v1h-1zM1 9h1v1h-1zM3 9h1v1h-1zM5 9h1v1h-1zM7 9h1v1h-1zM9 9h1v1h-1zM11 9h1v1h-1zM1 10h2v1h-2zM5 10h1v1h-1zM7 10h1v1h-1zM9 10h1v1h-1zM11 10h1v1h-1zM1 11h1v1h-1zM7 11h1v1h-1zM11 11h1v1h-1zM1 12h1v1h-1zM7 12h1v1h-1zM11 12h1v1h-1zM1 13h1v1h-1zM6 13h2v1h-2zM9 13h3v1h-3z"/><path id="g5236" d="M3 2h1v1h-1zM11 2h1v1h-1zM1 3h1v1h-1zM3 3h1v1h-1zM11 3h1v1h-1zM1 4h6v1h-6zM8 4h1v1h-1zM11 4h1v1h-1zM0 5h1v1h-1zM3 5h1v1h-1zM8 5h1v1h-1zM11 5h1v1h-1zM0 6h7v1h-7zM8 6h1v1h-1zM11 6h1v1h-1zM3 7h1v1h-1zM8 7h1v1h-1zM11 7h1v1h-1zM1 8h6v1h-6zM8 8h1v1h-1zM11 8h1v1h-1zM1 9h1v1h-1zM3 9h1v1h-1zM6 9h1v1h-1zM8 9h1v1h-1zM11 9h1v1h-1zM1 10h1v1h-1zM3 10h1v1h-1zM6 10h1v1h-1zM8 10h1v1h-1zM11 10h1v1h-1zM1 11h1v1h-1zM3 11h1v1h-1zM6 11h1v1h-1zM11 11h1v1h-1zM1 12h1v1h-1zM3 12h1v1h-1zM5 12h2v1h-2zM11 12h1v1h-1zM3 13h1v1h-1zM9 13h3v1h-3z"/><path id="g529f" d="M8 2h1v1h-1zM8 3h1v1h-1zM0 4h5v1h-5zM8 4h1v1h-1zM2 5h1v1h-1zM5 5h7v1h-7zM2 6h1v1h-1zM8 6h1v1h-1zM11 6h1v1h-1zM2 7h1v1h-1zM8 7h1v1h-1zM11 7h1v1h-1zM2 8h1v1h-1zM8 8h1v1h-1zM11 8h1v1h-1zM2 9h1v1h-1zM7 9h1v1h-1zM11 9h1v1h-1zM2 10h3v1h-3zM7 10h1v1h-1zM11 10h1v1h-1zM0 11h2v1h-2zM6 11h1v1h-1zM11 11h1v1h-1zM5 12h1v1h-1zM8 12h1v1h-1zM10 12h1v1h-1zM4 13h1v1h-1zM9 13h1v1h-1z"/><path id="g53d6" d="M0 2h6v1h-6zM1 3h1v1h-1zM4 3h1v1h-1zM6 3h5v1h-5zM1 4h1v1h-1zM4 4h1v1h-1zM6 4h1v1h-1zM10 4h1v1h-1zM1 5h4v1h-4zM6 5h1v1h-1zM10 5h1v1h-1zM1 6h1v1h-1zM4 6h1v1h-1zM7 6h1v1h-1zM10 6h1v1h-1zM1 7h1v1h-1zM4 7h1v1h-1zM7 7h1v1h-1zM9 7h1v1h-1zM1 8h4v1h-4zM7 8h1v1h-1zM9 8h1v1h-1zM1 9h1v1h-1zM4 9h1v1h-1zM8 9h1v1h-1zM1 10h1v1h-1zM4 10h2v1h-2zM8 10h1v1h-1zM1 11h4v1h-4zM7 11h1v1h-1zM9 11h1v1h-1zM0 12h2v1h-2zM4 12h1v1h-1zM6 12h1v1h-1zM10 12h1v1h-1zM4 13h2v1h-2zM11 13h1v1h-1z"/><path id="g53f0" d="M5 2h1v1h-1zM4 3h1v1h-1zM3 4h1v1h-1zM8 4h1v1h-1zM2 5h1v1h-1zM9 5h1v1h-1zM1 6h10v1h-10zM10 7h1v1h-1zM2 9h8v1h-8zM2 10h1v1h-1zM9 10h1v1h-1zM2 11h1v1h-1zM9 11h1v1h-1zM2 12h8v1h-8zM2 13h1v1h-1zM9 13h1v1h-1z"/><path id="g5410" d="M7 2h1v1h-1zM7 3h1v1h-1zM0 4h4v1h-4zM7 4h1v1h-1zM0 5h1v1h-1zM3 5h1v1h-1zM7 5h1v1h-1zM0 6h1v1h-1zM3 6h1v1h-1zM5 6h6v1h-6zM0 7h1v1h-1zM3 7h1v1h-1zM7 7h1v1h-1zM0 8h1v1h-1zM3 8h1v1h-1zM7 8h1v1h-1zM0 9h1v1h-1zM3 9h1v1h-1zM7 9h1v1h-1zM0 10h4v1h-4zM7 10h1v1h-1zM0 11h1v1h-1zM3 11h1v1h-1zM7 11h1v1h-1zM7 12h1v1h-1zM3 13h9v1h-9z"/><path id="g54c1" d="M2 2h7v1h-7zM2 3h1v1h-1zM8 3h1v1h-1zM2 4h1v1h-1zM8 4h1v1h-1zM2 5h1v1h-1zM8 5h1v1h-1zM2 6h7v1h-7zM0 8h5v1h-5zM6 8h5v1h-5zM0 9h1v1h-1zM4 9h1v1h-1zM6 9h1v1h-1zM10 9h1v1h-1zM0 10h1v1h-1zM4 10h1v1h-1zM6 10h1v1h-1zM10 10h1v1h-1zM0 11h1v1h-1zM4 11h1v1h-1zM6 11h1v1h-1zM10 11h1v1h-1zM0 12h5v1h-5zM6 12h5v1h-5zM0 13h1v1h-1zM4 13h1v1h-1zM6 13h1v1h-1zM10 13h1v1h-1z"/><path id="g552e" d="M2 2h1v1h-1zM6 2h1v1h-1zM2 3h9v1h-9zM2 4h1v1h-1zM6 4h1v1h-1zM1 5h9v1h-9zM0 6h1v1h-1zM2 6h1v1h-1zM6 6h1v1h-1zM2 7h8v1h-8zM2 8h1v1h-1zM6 8h1v1h-1zM2 9h9v1h-9zM2 11h8v1h-8zM2 12h1v1h-1zM9 12h1v1h-1zM2 13h8v1h-8z"/><path id="g5546" d="M5 2h1v1h-1zM0 3h12v1h-12zM3 4h1v1h-1zM8 4h1v1h-1zM4 5h1v1h-1zM7 5h1v1h-1zM1 6h10v1h-10zM1 7h1v1h-1zM4 7h1v1h-1zM7 7h1v1h-1zM10 7h1v1h-1zM1 8h1v1h-1zM3 8h1v1h-1zM8 8h1v1h-1zM10 8h1v1h-1zM1 9h2v1h-2zM4 9h4v1h-4zM9 9h2v1h-2zM1 10h1v1h-1zM4 10h1v1h-1zM7 10h1v1h-1zM10 10h1v1h-1zM1 11h1v1h-1zM4 11h1v1h-1zM7 11h1v1h-1zM10 11h1v1h-1zM1 12h1v1h-1zM4 12h4v1h-4zM10 12h1v1h-1zM1 13h1v1h-1zM9 13h2v1h-2z"/><path id="g5757" d="M2 2h1v1h-1zM7 2h1v1h-1zM2 3h1v1h-1zM7 3h1v1h-1zM2 4h1v1h-1zM5 4h6v1h-6zM0 5h5v1h-5zM7 5h1v1h-1zM10 5h1v1h-1zM2 6h1v1h-1zM7 6h1v1h-1zM10 6h1v1h-1zM2 7h1v1h-1zM7 7h1v1h-1zM10 7h1v1h-1zM2 8h1v1h-1zM4 8h8v1h-8zM2 9h1v1h-1zM7 9h1v1h-1zM2 10h3v1h-3zM6 10h1v1h-1zM8 10h1v1h-1zM0 11h2v1h-2zM6 11h1v1h-1zM9 11h1v1h-1zM5 12h1v1h-1zM10 12h1v1h-1zM4 13h1v1h-1zM11 13h1v1h-1z"/><path id="g590d" d="M3 2h1v1h-1zM2 3h10v1h-10zM1 4h1v1h-1zM3 4h1v1h-1zM9 4h1v1h-1zM0 5h1v1h-1zM3 5h7v1h-7zM3 6h1v1h-1zM9 6h1v1h-1zM3 7h7v1h-7zM4 8h1v1h-1zM3 9h7v1h-7zM2 10h1v1h-1zM4 10h1v1h-1zM8 10h1v1h-1zM1 11h1v1h-1zM5 11h1v1h-1zM7 11h1v1h-1zM5 12h3v1h-3zM1 13h4v1h-4zM8 13h4v1h-4z"/><path id="g597d" d="M2 2h1v1h-1zM2 3h1v1h-1zM6 3h6v1h-6zM2 4h1v1h-1zM10 4h1v1h-1zM0 5h5v1h-5zM9 5h1v1h-1zM2 6h1v1h-1zM4 6h1v1h-1zM9 6h1v1h-1zM1 7h1v1h-1zM4 7h1v1h-1zM6 7h6v1h-6zM1 8h1v1h-1zM4 8h1v1h-1zM9 8h1v1h-1zM2 9h2v1h-2zM9 9h1v1h-1zM3 10h1v1h-1zM9 10h1v1h-1zM2 11h1v1h-1zM4 11h1v1h-1zM9 11h1v1h-1zM1 12h1v1h-1zM7 12h1v1h-1zM9 12h1v1h-1zM0 13h1v1h-1zM8 13h1v1h-1z"/><path id="g5b9a" d="M5 2h1v1h-1zM6 3h1v1h-1zM1 4h11v1h-11zM1 5h1v1h-1zM11 5h1v1h-1zM0 6h1v1h-1zM2 6h8v1h-8zM6 7h1v1h-1zM3 8h1v1h-1zM6 8h1v1h-1zM3 9h1v1h-1zM6 9h4v1h-4zM3 10h1v1h-1zM6 10h1v1h-1zM2 11h1v1h-1zM4 11h1v1h-1zM6 11h1v1h-1zM1 12h1v1h-1zM5 12h2v1h-2zM0 13h1v1h-1zM6 13h6v1h-6z"/><path id="g5ba2" d="M6 2h1v1h-1zM0 3h12v1h-12zM0 4h1v1h-1zM4 4h1v1h-1zM11 4h1v1h-1zM0 5h1v1h-1zM3 5h7v1h-7zM11 5h1v1h-1zM2 6h1v1h-1zM4 6h1v1h-1zM8 6h1v1h-1zM5 7h3v1h-3zM3 8h2v1h-2zM8 8h1v1h-1zM0 9h3v1h-3zM9 9h3v1h-3zM3 10h7v1h-7zM3 11h1v1h-1zM9 11h1v1h-1zM3 12h1v1h-1zM9 12h1v1h-1zM3 13h7v1h-7z"/><path id="g5e01" d="M9 2h2v1h-2zM1 3h8v1h-8zM6 4h1v1h-1zM6 5h1v1h-1zM2 6h9v1h-9zM2 7h1v1h-1zM6 7h1v1h-1zM10 7h1v1h-1zM2 8h1v1h-1zM6 8h1v1h-1zM10 8h1v1h-1zM2 9h1v1h-1zM6 9h1v1h-1zM10 9h1v1h-1zM2 10h1v1h-1zM6 10h1v1h-1zM8 10h1v1h-1zM10 10h1v1h-1zM2 11h1v1h-1zM6 11h1v1h-1zM9 11h1v1h-1zM6 12h1v1h-1zM6 13h1v1h-1z"/><path id="g5e76" d="M3 2h1v1h-1zM9 2h1v1h-1zM4 3h1v1h-1zM8 3h1v1h-1zM7 4h1v1h-1zM2 5h9v1h-9zM4 6h1v1h-1zM8 6h1v1h-1zM4 7h1v1h-1zM8 7h1v1h-1zM4 8h1v1h-1zM8 8h1v1h-1zM0 9h12v1h-12zM4 10h1v1h-1zM8 10h1v1h-1zM3 11h1v1h-1zM8 11h1v1h-1zM3 12h1v1h-1zM8 12h1v1h-1zM2 13h1v1h-1zM8 13h1v1h-1z"/><path id="g5f53" d="M6 2h1v1h-1zM2 3h1v1h-1zM6 3h1v1h-1zM10 3h1v1h-1zM3 4h1v1h-1zM6 4h1v1h-1zM10 4h1v1h-1zM3 5h1v1h-1zM6 5h1v1h-1zM9 5h1v1h-1zM6 6h1v1h-1zM8 6h1v1h-1zM1 7h10v1h-10zM10 8h1v1h-1zM10 9h1v1h-1zM2 10h9v1h-9zM10 11h1v1h-1zM10 12h1v1h-1zM1 13h10v1h-10z"/><path id="g5f85" d="M3 2h1v1h-1zM7 2h1v1h-1zM2 3h1v1h-1zM7 3h1v1h-1zM1 4h1v1h-1zM5 4h6v1h-6zM0 5h1v1h-1zM3 5h1v1h-1zM7 5h1v1h-1zM2 6h1v1h-1zM4 6h8v1h-8zM1 7h2v1h-2zM9 7h1v1h-1zM0 8h1v1h-1zM2 8h1v1h-1zM4 8h8v1h-8zM2 9h1v1h-1zM9 9h1v1h-1zM2 10h1v1h-1zM6 10h1v1h-1zM9 10h1v1h-1zM2 11h1v1h-1zM7 11h1v1h-1zM9 11h1v1h-1zM2 12h1v1h-1zM9 12h1v1h-1zM2 13h1v1h-1zM7 13h3v1h-3z"/><path id="g6210" d="M6 2h1v1h-1zM9 2h1v1h-1zM6 3h1v1h-1zM10 3h1v1h-1zM6 4h1v1h-1zM1 5h11v1h-11zM1 6h1v1h-1zM6 6h1v1h-1zM1 7h1v1h-1zM6 7h1v1h-1zM10 7h1v1h-1zM1 8h5v1h-5zM7 8h1v1h-1zM10 8h1v1h-1zM1 9h1v1h-1zM5 9h1v1h-1zM7 9h1v1h-1zM9 9h1v1h-1zM1 10h1v1h-1zM5 10h1v1h-1zM8 10h1v1h-1zM1 11h1v1h-1zM3 11h1v1h-1zM5 11h1v1h-1zM8 11h1v1h-1zM11 11h1v1h-1zM0 12h1v1h-1zM4 12h1v1h-1zM7 12h1v1h-1zM9 12h1v1h-1zM11 12h1v1h-1zM0 13h1v1h-1zM6 13h1v1h-1zM10 13h2v1h-2z"/><path id="g627e" d="M2 2h1v1h-1zM7 2h1v1h-1zM2 3h1v1h-1zM7 3h1v1h-1zM9 3h1v1h-1zM2 4h1v1h-1zM7 4h1v1h-1zM10 4h1v1h-1zM0 5h12v1h-12zM2 6h1v1h-1zM7 6h1v1h-1zM2 7h1v1h-1zM4 7h1v1h-1zM7 7h1v1h-1zM10 7h1v1h-1zM2 8h2v1h-2zM7 8h1v1h-1zM10 8h1v1h-1zM0 9h3v1h-3zM7 9h1v1h-1zM9 9h1v1h-1zM2 10h1v1h-1zM8 10h1v1h-1zM2 11h1v1h-1zM7 11h2v1h-2zM11 11h1v1h-1zM0 12h1v1h-1zM2 12h1v1h-1zM6 12h1v1h-1zM9 12h1v1h-1zM11 12h1v1h-1zM1 13h1v1h-1zM4 13h2v1h-2zM10 13h2v1h-2z"/><path id="g6295" d="M2 2h1v1h-1zM6 2h4v1h-4zM2 3h1v1h-1zM6 3h1v1h-1zM9 3h1v1h-1zM2 4h1v1h-1zM6 4h1v1h-1zM9 4h1v1h-1zM0 5h5v1h-5zM6 5h1v1h-1zM9 5h1v1h-1zM2 6h1v1h-1zM5 6h1v1h-1zM10 6h2v1h-2zM2 7h1v1h-1zM2 8h2v1h-2zM5 8h6v1h-6zM0 9h3v1h-3zM6 9h1v1h-1zM9 9h1v1h-1zM2 10h1v1h-1zM7 10h1v1h-1zM9 10h1v1h-1zM2 11h1v1h-1zM8 11h1v1h-1zM0 12h1v1h-1zM2 12h1v1h-1zM7 12h1v1h-1zM9 12h1v1h-1zM1 13h1v1h-1zM5 13h2v1h-2zM10 13h2v1h-2z"/><path id="g6362" d="M2 2h1v1h-1zM6 2h1v1h-1zM2 3h1v1h-1zM6 3h5v1h-5zM2 4h1v1h-1zM5 4h1v1h-1zM9 4h1v1h-1zM0 5h6v1h-6zM8 5h1v1h-1zM2 6h1v1h-1zM5 6h6v1h-6zM2 7h1v1h-1zM5 7h1v1h-1zM8 7h1v1h-1zM10 7h1v1h-1zM2 8h2v1h-2zM5 8h1v1h-1zM8 8h1v1h-1zM10 8h1v1h-1zM0 9h3v1h-3zM4 9h8v1h-8zM2 10h1v1h-1zM8 10h1v1h-1zM2 11h1v1h-1zM7 11h1v1h-1zM9 11h1v1h-1zM0 12h1v1h-1zM2 12h1v1h-1zM6 12h1v1h-1zM10 12h1v1h-1zM1 13h1v1h-1zM4 13h2v1h-2zM11 13h1v1h-1z"/><path id="g63a7" d="M2 2h1v1h-1zM8 2h1v1h-1zM2 3h1v1h-1zM5 3h7v1h-7zM2 4h1v1h-1zM5 4h1v1h-1zM11 4h1v1h-1zM0 5h6v1h-6zM7 5h1v1h-1zM9 5h1v1h-1zM11 5h1v1h-1zM2 6h1v1h-1zM6 6h1v1h-1zM10 6h1v1h-1zM2 7h1v1h-1zM5 7h1v1h-1zM11 7h1v1h-1zM2 8h2v1h-2zM0 9h3v1h-3zM5 9h6v1h-6zM2 10h1v1h-1zM8 10h1v1h-1zM2 11h1v1h-1zM8 11h1v1h-1zM0 12h1v1h-1zM2 12h1v1h-1zM8 12h1v1h-1zM1 13h1v1h-1zM4 13h8v1h-8z"/><path id="g653e" d="M2 2h1v1h-1zM8 2h1v1h-1zM3 3h1v1h-1zM8 3h1v1h-1zM0 4h6v1h-6zM7 4h5v1h-5zM2 5h1v1h-1zM7 5h1v1h-1zM10 5h1v1h-1zM2 6h1v1h-1zM6 6h2v1h-2zM10 6h1v1h-1zM2 7h4v1h-4zM7 7h1v1h-1zM10 7h1v1h-1zM2 8h1v1h-1zM5 8h1v1h-1zM8 8h1v1h-1zM10 8h1v1h-1zM2 9h1v1h-1zM5 9h1v1h-1zM8 9h1v1h-1zM10 9h1v1h-1zM2 10h1v1h-1zM5 10h1v1h-1zM9 10h1v1h-1zM1 11h1v1h-1zM5 11h1v1h-1zM9 11h1v1h-1zM1 12h1v1h-1zM5 12h1v1h-1zM8 12h1v1h-1zM10 12h1v1h-1zM0 13h1v1h-1zM3 13h2v1h-2zM6 13h2v1h-2zM11 13h1v1h-1z"/><path id="g65f6" d="M9 2h1v1h-1zM0 3h4v1h-4zM9 3h1v1h-1zM0 4h1v1h-1zM3 4h1v1h-1zM9 4h1v1h-1zM0 5h1v1h-1zM3 5h9v1h-9zM0 6h1v1h-1zM3 6h1v1h-1zM9 6h1v1h-1zM0 7h4v1h-4zM5 7h1v1h-1zM9 7h1v1h-1zM0 8h1v1h-1zM3 8h1v1h-1zM6 8h1v1h-1zM9 8h1v1h-1zM0 9h1v1h-1zM3 9h1v1h-1zM6 9h1v1h-1zM9 9h1v1h-1zM0 10h1v1h-1zM3 10h1v1h-1zM9 10h1v1h-1zM0 11h4v1h-4zM9 11h1v1h-1zM0 12h1v1h-1zM3 12h1v1h-1zM7 12h1v1h-1zM9 12h1v1h-1zM8 13h1v1h-1z"/><path id="g6709" d="M5 2h1v1h-1zM5 3h1v1h-1zM0 4h12v1h-12zM4 5h1v1h-1zM3 6h7v1h-7zM2 7h1v1h-1zM4 7h1v1h-1zM9 7h1v1h-1zM1 8h1v1h-1zM4 8h6v1h-6zM0 9h1v1h-1zM4 9h1v1h-1zM9 9h1v1h-1zM4 10h6v1h-6zM4 11h1v1h-1zM9 11h1v1h-1zM4 12h1v1h-1zM9 12h1v1h-1zM4 13h1v1h-1zM8 13h2v1h-2z"/><path id="g673a" d="M2 2h1v1h-1zM2 3h1v1h-1zM6 3h4v1h-4zM2 4h1v1h-1zM6 4h1v1h-1zM9 4h1v1h-1zM0 5h5v1h-5zM6 5h1v1h-1zM9 5h1v1h-1zM2 6h1v1h-1zM6 6h1v1h-1zM9 6h1v1h-1zM1 7h3v1h-3zM6 7h1v1h-1zM9 7h1v1h-1zM1 8h2v1h-2zM4 8h1v1h-1zM6 8h1v1h-1zM9 8h1v1h-1zM0 9h1v1h-1zM2 9h1v1h-1zM4 9h1v1h-1zM6 9h1v1h-1zM9 9h1v1h-1zM0 10h1v1h-1zM2 10h1v1h-1zM6 10h1v1h-1zM9 10h1v1h-1zM2 11h1v1h-1zM5 11h1v1h-1zM9 11h1v1h-1zM11 11h1v1h-1zM2 12h1v1h-1zM5 12h1v1h-1zM9 12h1v1h-1zM11 12h1v1h-1zM2 13h1v1h-1zM4 13h1v1h-1zM9 13h3v1h-3z"/><path id="g683c" d="M2 2h1v1h-1zM6 2h1v1h-1zM2 3h1v1h-1zM6 3h5v1h-5zM2 4h1v1h-1zM6 4h1v1h-1zM10 4h1v1h-1zM0 5h6v1h-6zM7 5h1v1h-1zM9 5h1v1h-1zM2 6h1v1h-1zM8 6h1v1h-1zM1 7h3v1h-3zM7 7h1v1h-1zM9 7h1v1h-1zM0 8h1v1h-1zM2 8h1v1h-1zM4 8h1v1h-1zM6 8h1v1h-1zM10 8h1v1h-1zM0 9h1v1h-1zM2 9h1v1h-1zM4 9h8v1h-8zM2 10h1v1h-1zM6 10h1v1h-1zM10 10h1v1h-1zM2 11h1v1h-1zM6 11h1v1h-1zM10 11h1v1h-1zM2 12h1v1h-1zM6 12h1v1h-1zM10 12h1v1h-1zM2 13h1v1h-1zM6 13h5v1h-5z"/><path id="g6a21" d="M2 2h1v1h-1zM6 2h1v1h-1zM9 2h1v1h-1zM2 3h1v1h-1zM4 3h8v1h-8zM2 4h1v1h-1zM6 4h1v1h-1zM9 4h1v1h-1zM0 5h11v1h-11zM2 6h1v1h-1zM5 6h1v1h-1zM10 6h1v1h-1zM2 7h2v1h-2zM5 7h6v1h-6zM1 8h2v1h-2zM4 8h2v1h-2zM10 8h1v1h-1zM0 9h1v1h-1zM2 9h1v1h-1zM5 9h6v1h-6zM0 10h1v1h-1zM2 10h1v1h-1zM7 10h1v1h-1zM2 11h1v1h-1zM4 11h8v1h-8zM2 12h1v1h-1zM6 12h1v1h-1zM9 12h1v1h-1zM2 13h1v1h-1zM4 13h2v1h-2zM10 13h2v1h-2z"/><path id="g6d88" d="M1 2h1v1h-1zM7 2h1v1h-1zM2 3h1v1h-1zM4 3h1v1h-1zM7 3h1v1h-1zM10 3h1v1h-1zM5 4h1v1h-1zM7 4h1v1h-1zM9 4h1v1h-1zM0 5h1v1h-1zM7 5h1v1h-1zM1 6h1v1h-1zM5 6h6v1h-6zM3 7h1v1h-1zM5 7h1v1h-1zM10 7h1v1h-1zM2 8h1v1h-1zM5 8h6v1h-6zM2 9h1v1h-1zM5 9h1v1h-1zM10 9h1v1h-1zM0 10h2v1h-2zM5 10h6v1h-6zM1 11h1v1h-1zM5 11h1v1h-1zM10 11h1v1h-1zM1 12h1v1h-1zM5 12h1v1h-1zM10 12h1v1h-1zM1 13h1v1h-1zM5 13h1v1h-1zM9 13h2v1h-2z"/><path id="g786e" d="M7 2h1v1h-1zM0 3h5v1h-5zM7 3h4v1h-4zM2 4h1v1h-1zM6 4h1v1h-1zM9 4h1v1h-1zM1 5h1v1h-1zM5 5h7v1h-7zM1 6h5v1h-5zM8 6h1v1h-1zM11 6h1v1h-1zM0 7h2v1h-2zM3 7h1v1h-1zM5 7h7v1h-7zM1 8h1v1h-1zM3 8h1v1h-1zM5 8h1v1h-1zM8 8h1v1h-1zM11 8h1v1h-1zM1 9h1v1h-1zM3 9h1v1h-1zM5 9h1v1h-1zM8 9h1v1h-1zM11 9h1v1h-1zM1 10h1v1h-1zM3 10h1v1h-1zM5 10h7v1h-7zM1 11h3v1h-3zM5 11h1v1h-1zM8 11h1v1h-1zM11 11h1v1h-1zM1 12h1v1h-1zM5 12h1v1h-1zM8 12h1v1h-1zM11 12h1v1h-1zM4 13h1v1h-1zM10 13h2v1h-2z"/><path id="g79cd" d="M3 2h2v1h-2zM8 2h1v1h-1zM0 3h3v1h-3zM8 3h1v1h-1zM2 4h1v1h-1zM8 4h1v1h-1zM2 5h1v1h-1zM5 5h7v1h-7zM0 6h6v1h-6zM8 6h1v1h-1zM11 6h1v1h-1zM2 7h1v1h-1zM5 7h1v1h-1zM8 7h1v1h-1zM11 7h1v1h-1zM1 8h3v1h-3zM5 8h1v1h-1zM8 8h1v1h-1zM11 8h1v1h-1zM1 9h2v1h-2zM4 9h8v1h-8zM0 10h1v1h-1zM2 10h1v1h-1zM8 10h1v1h-1zM2 11h1v1h-1zM8 11h1v1h-1zM2 12h1v1h-1zM8 12h1v1h-1zM2 13h1v1h-1zM8 13h1v1h-1z"/><path id="g7b49" d="M2 2h1v1h-1zM7 2h1v1h-1zM2 3h4v1h-4zM7 3h5v1h-5zM1 4h1v1h-1zM3 4h1v1h-1zM6 4h1v1h-1zM8 4h1v1h-1zM0 5h1v1h-1zM4 5h1v1h-1zM6 5h1v1h-1zM9 5h1v1h-1zM2 6h9v1h-9zM6 7h1v1h-1zM0 8h12v1h-12zM8 9h1v1h-1zM1 10h10v1h-10zM4 11h1v1h-1zM8 11h1v1h-1zM5 12h1v1h-1zM8 12h1v1h-1zM7 13h2v1h-2z"/><path id="g7ee7" d="M2 2h1v1h-1zM4 2h1v1h-1zM8 2h1v1h-1zM2 3h1v1h-1zM4 3h2v1h-2zM8 3h1v1h-1zM11 3h1v1h-1zM1 4h1v1h-1zM4 4h1v1h-1zM6 4h5v1h-5zM1 5h1v1h-1zM3 5h2v1h-2zM8 5h1v1h-1zM0 6h3v1h-3zM4 6h8v1h-8zM2 7h1v1h-1zM4 7h1v1h-1zM8 7h1v1h-1zM1 8h1v1h-1zM3 8h2v1h-2zM7 8h3v1h-3zM0 9h3v1h-3zM4 9h1v1h-1zM6 9h1v1h-1zM8 9h1v1h-1zM10 9h1v1h-1zM4 10h2v1h-2zM8 10h1v1h-1zM11 10h1v1h-1zM2 11h3v1h-3zM8 11h1v1h-1zM0 12h2v1h-2zM4 12h1v1h-1zM8 12h1v1h-1zM4 13h8v1h-8z"/><path id="g7eed" d="M2 2h1v1h-1zM8 2h1v1h-1zM2 3h1v1h-1zM5 3h7v1h-7zM1 4h1v1h-1zM8 4h1v1h-1zM1 5h1v1h-1zM3 5h1v1h-1zM5 5h7v1h-7zM0 6h3v1h-3zM6 6h1v1h-1zM9 6h1v1h-1zM11 6h1v1h-1zM2 7h1v1h-1zM5 7h1v1h-1zM7 7h1v1h-1zM9 7h1v1h-1zM1 8h1v1h-1zM3 8h1v1h-1zM6 8h1v1h-1zM9 8h1v1h-1zM0 9h3v1h-3zM4 9h8v1h-8zM8 10h1v1h-1zM2 11h2v1h-2zM7 11h1v1h-1zM9 11h1v1h-1zM0 12h2v1h-2zM6 12h1v1h-1zM10 12h1v1h-1zM4 13h2v1h-2zM11 13h1v1h-1z"/><path id="g8ba4" d="M2 2h1v1h-1zM8 2h1v1h-1zM3 3h1v1h-1zM8 3h1v1h-1zM3 4h1v1h-1zM8 4h1v1h-1zM8 5h1v1h-1zM0 6h4v1h-4zM8 6h1v1h-1zM3 7h1v1h-1zM8 7h1v1h-1zM3 8h1v1h-1zM8 8h1v1h-1zM3 9h1v1h-1zM5 9h1v1h-1zM7 9h1v1h-1zM9 9h1v1h-1zM3 10h2v1h-2zM7 10h1v1h-1zM9 10h1v1h-1zM3 11h1v1h-1zM6 11h1v1h-1zM10 11h1v1h-1zM5 12h1v1h-1zM10 12h1v1h-1zM3 13h2v1h-2zM11 13h1v1h-1z"/><path id="g8d27" d="M3 2h1v1h-1zM6 2h1v1h-1zM9 2h1v1h-1zM2 3h1v1h-1zM6 3h1v1h-1zM8 3h1v1h-1zM1 4h2v1h-2zM6 4h2v1h-2zM0 5h1v1h-1zM2 5h1v1h-1zM4 5h3v1h-3zM10 5h1v1h-1zM2 6h1v1h-1zM7 6h4v1h-4zM2 8h7v1h-7zM2 9h1v1h-1zM5 9h1v1h-1zM8 9h1v1h-1zM2 10h1v1h-1zM5 10h1v1h-1zM8 10h1v1h-1zM2 11h1v1h-1zM5 11h1v1h-1zM8 11h1v1h-1zM4 12h1v1h-1zM6 12h2v1h-2zM1 13h3v1h-3zM8 13h2v1h-2z"/><path id="g8d2d" d="M0 2h5v1h-5zM6 2h1v1h-1zM0 3h1v1h-1zM4 3h1v1h-1zM6 3h1v1h-1zM0 4h1v1h-1zM2 4h1v1h-1zM4 4h1v1h-1zM6 4h6v1h-6zM0 5h1v1h-1zM2 5h1v1h-1zM4 5h1v1h-1zM6 5h1v1h-1zM11 5h1v1h-1zM0 6h1v1h-1zM2 6h1v1h-1zM4 6h2v1h-2zM11 6h1v1h-1zM0 7h1v1h-1zM2 7h1v1h-1zM4 7h1v1h-1zM7 7h1v1h-1zM11 7h1v1h-1zM0 8h1v1h-1zM2 8h1v1h-1zM4 8h1v1h-1zM7 8h1v1h-1zM11 8h1v1h-1zM0 9h1v1h-1zM2 9h1v1h-1zM4 9h1v1h-1zM6 9h1v1h-1zM9 9h1v1h-1zM11 9h1v1h-1zM2 10h1v1h-1zM5 10h5v1h-5zM11 10h1v1h-1zM1 11h1v1h-1zM3 11h1v1h-1zM11 11h1v1h-1zM1 12h1v1h-1zM4 12h1v1h-1zM11 12h1v1h-1zM0 13h1v1h-1zM4 13h1v1h-1zM9 13h2v1h-2z"/><path id="g8f6c" d="M2 2h1v1h-1zM8 2h1v1h-1zM2 3h1v1h-1zM8 3h1v1h-1zM0 4h5v1h-5zM6 4h5v1h-5zM2 5h1v1h-1zM7 5h1v1h-1zM1 6h1v1h-1zM3 6h1v1h-1zM7 6h1v1h-1zM1 7h1v1h-1zM3 7h1v1h-1zM5 7h7v1h-7zM0 8h5v1h-5zM6 8h1v1h-1zM3 9h1v1h-1zM6 9h5v1h-5zM3 10h3v1h-3zM10 10h1v1h-1zM0 11h4v1h-4zM7 11h1v1h-1zM9 11h1v1h-1zM3 12h1v1h-1zM8 12h2v1h-2zM3 13h1v1h-1zM9 13h1v1h-1z"/><path id="g9000" d="M1 2h1v1h-1zM5 2h6v1h-6zM2 3h1v1h-1zM5 3h1v1h-1zM10 3h1v1h-1zM2 4h1v1h-1zM5 4h6v1h-6zM5 5h1v1h-1zM10 5h1v1h-1zM5 6h6v1h-6zM0 7h3v1h-3zM5 7h1v1h-1zM7 7h1v1h-1zM11 7h1v1h-1zM2 8h1v1h-1zM5 8h1v1h-1zM7 8h1v1h-1zM10 8h1v1h-1zM2 9h1v1h-1zM5 9h1v1h-1zM8 9h2v1h-2zM2 10h1v1h-1zM5 10h1v1h-1zM7 10h1v1h-1zM9 10h1v1h-1zM2 11h1v1h-1zM5 11h2v1h-2zM10 11h2v1h-2zM1 12h1v1h-1zM3 12h1v1h-1zM0 13h1v1h-1zM4 13h8v1h-8z"/><path id="g94b1" d="M1 2h1v1h-1zM7 2h1v1h-1zM9 2h1v1h-1zM1 3h1v1h-1zM7 3h1v1h-1zM10 3h1v1h-1zM1 4h4v1h-4zM7 4h1v1h-1zM10 4h2v1h-2zM0 5h1v1h-1zM5 5h5v1h-5zM0 6h5v1h-5zM7 6h1v1h-1zM2 7h1v1h-1zM7 7h1v1h-1zM10 7h2v1h-2zM0 8h10v1h-10zM2 9h1v1h-1zM7 9h1v1h-1zM11 9h1v1h-1zM2 10h1v1h-1zM8 10h1v1h-1zM10 10h1v1h-1zM2 11h1v1h-1zM4 11h1v1h-1zM8 11h2v1h-2zM2 12h2v1h-2zM7 12h1v1h-1zM9 12h1v1h-1zM11 12h1v1h-1zM2 13h1v1h-1zM5 13h2v1h-2zM10 13h2v1h-2z"/><path id="g96f6" d="M1 2h9v1h-9zM5 3h1v1h-1zM0 4h11v1h-11zM0 5h1v1h-1zM3 5h1v1h-1zM5 5h1v1h-1zM7 5h1v1h-1zM10 5h1v1h-1zM0 6h1v1h-1zM2 6h1v1h-1zM5 6h1v1h-1zM8 6h1v1h-1zM10 6h1v1h-1zM5 7h1v1h-1zM2 8h3v1h-3zM6 8h3v1h-3zM0 9h2v1h-2zM5 9h1v1h-1zM9 9h2v1h-2zM2 10h6v1h-6zM6 11h1v1h-1zM4 12h2v1h-2zM6 13h1v1h-1z"/><path id="g987e" d="M1 2h5v1h-5zM7 2h5v1h-5zM1 3h1v1h-1zM9 3h1v1h-1zM1 4h1v1h-1zM8 4h1v1h-1zM1 5h1v1h-1zM3 5h3v1h-3zM7 5h5v1h-5zM1 6h1v1h-1zM3 6h1v1h-1zM5 6h1v1h-1zM7 6h1v1h-1zM11 6h1v1h-1zM1 7h1v1h-1zM3 7h1v1h-1zM5 7h1v1h-1zM7 7h1v1h-1zM9 7h1v1h-1zM11 7h1v1h-1zM1 8h1v1h-1zM3 8h1v1h-1zM5 8h1v1h-1zM7 8h1v1h-1zM9 8h1v1h-1zM11 8h1v1h-1zM1 9h1v1h-1zM3 9h3v1h-3zM7 9h1v1h-1zM9 9h1v1h-1zM11 9h1v1h-1zM1 10h1v1h-1zM3 10h1v1h-1zM7 10h1v1h-1zM9 10h1v1h-1zM11 10h1v1h-1zM1 11h1v1h-1zM3 11h1v1h-1zM5 11h1v1h-1zM8 11h1v1h-1zM10 11h1v1h-1zM0 12h1v1h-1zM3 12h2v1h-2zM7 12h1v1h-1zM11 12h1v1h-1zM0 13h1v1h-1zM3 13h1v1h-1zM6 13h1v1h-1zM11 13h1v1h-1z"/><path id="gff1a" d="M6 6h2v1h-2zM6 7h2v1h-2zM6 11h2v1h-2zM6 12h2v1h-2z"/><path id="gff1b" d="M3 6h2v1h-2zM3 7h2v1h-2zM3 10h2v1h-2zM3 11h2v1h-2zM4 12h1v1h-1zM3 13h1v1h-1z"/></defs><use href="#g552e" x="178" y="120"/><use href="#g8d27" x="192" y="120"/><use href="#g63a7" x="206" y="120"/><use href="#g5236" x="220" y="120"/><use href="#g6a21" x="234" y="120"/><use href="#g5757" x="248" y="120"/><use href="#g4e00" x="178" y="136"/><use href="#g53f0" x="192" y="136"/><use href="#g552e" x="206" y="136"/><use href="#g8d27" x="220" y="136"/><use href="#g673a" x="234" y="136"/><use href="#gff1a" x="244" y="136"/><use href="#g552e" x="262" y="136"/><use href="#g8d27" x="276" y="136"/><use href="#g673a" x="290" y="136"/><use href="#g4e2d" x="304" y="136"/><use href="#g6709" x="318" y="136"/><use href="#g4e00" x="332" y="136"/><use href="#g79cd" x="346" y="136"/><use href="#g5546" x="360" y="136"/><use href="#g54c1" x="374" y="136"/><use href="#g4ef7" x="396" y="136"/><use href="#g683c" x="410" y="136"/><use href="#g5143" x="440" y="136"/><use href="#g3001" x="184" y="152"/><use href="#g5f53" x="200" y="152"/><use href="#g987e" x="214" y="152"/><use href="#g5ba2" x="228" y="152"/><use href="#g53d6" x="242" y="152"/><use href="#g6d88" x="256" y="152"/><use href="#g8d2d" x="270" y="152"/><use href="#g4e70" x="284" y="152"/><use href="#g65f6" x="298" y="152"/><use href="#g9000" x="312" y="152"/><use href="#g94b1" x="326" y="152"/><use href="#gff1b" x="339" y="152"/><use href="#g3001" x="184" y="168"/><use href="#g5f53" x="200" y="168"/><use href="#g987e" x="214" y="168"/><use href="#g5ba2" x="228" y="168"/><use href="#g521a" x="242" y="168"/><use href="#g597d" x="256" y="168"/><use href="#g653e" x="270" y="168"/><use href="#g5165" x="284" y="168"/><use href="#g5143" x="314" y="168"/><use href="#g5e76" x="328" y="168"/><use href="#g786e" x="342" y="168"/><use href="#g5b9a" x="356" y="168"/><use href="#g65f6" x="370" y="168"/><use href="#g5410" x="384" y="168"/><use href="#g51fa" x="398" y="168"/><use href="#g5546" x="412" y="168"/><use href="#g54c1" x="426" y="168"/><use href="#g3001" x="184" y="184"/><use href="#g5f53" x="200" y="184"/><use href="#g987e" x="214" y="184"/><use href="#g5ba2" x="228" y="184"/><use href="#g653e" x="242" y="184"/><use href="#g5165" x="256" y="184"/><use href="#g5143" x="278" y="184"/><use href="#g65f6" x="292" y="184"/><use href="#g7b49" x="306" y="184"/><use href="#g5f85" x="320" y="184"/><use href="#g7ee7" x="334" y="184"/><use href="#g7eed" x="348" y="184"/><use href="#g6295" x="362" y="184"/><use href="#g5e01" x="376" y="184"/><use href="#gff1b" x="389" y="184"/><use href="#g3001" x="184" y="200"/><use href="#g5f53" x="200" y="200"/><use href="#g987e" x="214" y="200"/><use href="#g5ba2" x="228" y="200"/><use href="#g653e" x="242" y="200"/><use href="#g5165" x="256" y="200"/><use href="#g5143" x="286" y="200"/><use href="#g4e14" x="300" y="200"/><use href="#g786e" x="314" y="200"/><use href="#g5b9a" x="328" y="200"/><use href="#g65f6" x="342" y="200"/><use href="#g5410" x="356" y="200"/><use href="#g51fa" x="370" y="200"/><use href="#g5546" x="384" y="200"/><use href="#g54c1" x="398" y="200"/><use href="#g5e76" x="412" y="200"/><use href="#g627e" x="426" y="200"/><use href="#g96f6" x="440" y="200"/><use href="#g3002" x="450" y="200"/><use href="#g590d" x="466" y="264"/><use href="#g4f4d" x="480" y="264"/><use href="#g786e" x="466" y="296"/><use href="#g8ba4" x="480" y="296"/><use href="#g53d6" x="466" y="312"/><use href="#g6d88" x="480" y="312"/><use href="#g6295" x="466" y="344"/><use href="#g5e01" x="480" y="344"/><use href="#g6295" x="474" y="360"/><use href="#g5e01" x="488" y="360"/><use href="#g8d2d" x="474" y="392"/><use href="#g4e70" x="488" y="392"/><use href="#g6210" x="502" y="392"/><use href="#g529f" x="516" y="392"/><use href="#g6295" x="626" y="408"/><use href="#g5e01" x="640" y="408"/><use href="#g627e" x="618" y="424"/><use href="#g96f6" x="632" y="424"/><use href="#g5143" x="746" y="504"/><use href="#g8f6c" x="450" y="584"/><use href="#g6362" x="464" y="584"/><use href="#g4e3a" x="478" y="584"/><rect x="281" y="88" width="8" height="1" fill="#ff1050" opacity="0.85"/><rect x="329" y="88" width="8" height="1" fill="#ff1050" opacity="0.85"/><rect x="281" y="104" width="8" height="1" fill="#ff1050" opacity="0.85"/><rect x="329" y="104" width="8" height="1" fill="#ff1050" opacity="0.85"/><rect x="281" y="120" width="8" height="1" fill="#ff1050" opacity="0.85"/><rect x="329" y="120" width="8" height="1" fill="#ff1050" opacity="0.85"/><rect x="162" y="129" width="6" height="1" fill="#008000"/><rect x="170" y="129" width="6" height="1" fill="#008000"/><rect x="162" y="145" width="6" height="1" fill="#008000"/><rect x="170" y="145" width="6" height="1" fill="#008000"/><rect x="162" y="161" width="6" height="1" fill="#008000"/><rect x="170" y="161" width="6" height="1" fill="#008000"/><rect x="162" y="177" width="6" height="1" fill="#008000"/><rect x="170" y="177" width="6" height="1" fill="#008000"/><rect x="162" y="193" width="6" height="1" fill="#008000"/><rect x="170" y="193" width="6" height="1" fill="#008000"/><rect x="162" y="209" width="6" height="1" fill="#008000"/><rect x="170" y="209" width="6" height="1" fill="#008000"/><rect x="249" y="232" width="8" height="1" fill="#000000" opacity="0.85"/><rect x="393" y="264" width="8" height="1" fill="#ff1050" opacity="0.85"/><rect x="249" y="280" width="8" height="1" fill="#000000" opacity="0.85"/><rect x="393" y="280" width="8" height="1" fill="#ff1050" opacity="0.85"/><rect x="450" y="273" width="6" height="1" fill="#008000"/><rect x="458" y="273" width="6" height="1" fill="#008000"/><rect x="265" y="312" width="8" height="1" fill="#000000" opacity="0.85"/><rect x="393" y="312" width="8" height="1" fill="#ff1050" opacity="0.85"/><rect x="450" y="305" width="6" height="1" fill="#008000"/><rect x="458" y="305" width="6" height="1" fill="#008000"/><rect x="257" y="328" width="8" height="1" fill="#000000" opacity="0.85"/><rect x="393" y="328" width="8" height="1" fill="#ff1050" opacity="0.85"/><rect x="450" y="321" width="6" height="1" fill="#008000"/><rect x="458" y="321" width="6" height="1" fill="#008000"/><rect x="241" y="360" width="8" height="1" fill="#000000" opacity="0.85"/><rect x="257" y="360" width="8" height="1" fill="#000000" opacity="0.85"/><rect x="393" y="360" width="8" height="1" fill="#ff1050" opacity="0.85"/><rect x="450" y="353" width="6" height="1" fill="#008000"/><rect x="458" y="353" width="6" height="1" fill="#008000"/><rect x="241" y="376" width="8" height="1" fill="#000000" opacity="0.85"/><rect x="265" y="376" width="8" height="1" fill="#000000" opacity="0.85"/><rect x="401" y="376" width="8" height="1" fill="#ff1050" opacity="0.85"/><rect x="458" y="369" width="6" height="1" fill="#008000"/><rect x="466" y="369" width="6" height="1" fill="#008000"/><rect x="233" y="408" width="8" height="1" fill="#000000" opacity="0.85"/><rect x="401" y="408" width="8" height="1" fill="#ff1050" opacity="0.85"/><rect x="458" y="401" width="6" height="1" fill="#008000"/><rect x="466" y="401" width="6" height="1" fill="#008000"/><rect x="249" y="424" width="8" height="1" fill="#000000" opacity="0.85"/><rect x="401" y="424" width="8" height="1" fill="#ff1050" opacity="0.85"/><rect x="449" y="424" width="8" height="1" fill="#ff1050" opacity="0.85"/><rect x="610" y="417" width="6" height="1" fill="#008000"/><rect x="618" y="417" width="6" height="1" fill="#008000"/><rect x="265" y="440" width="8" height="1" fill="#000000" opacity="0.85"/><rect x="401" y="440" width="8" height="1" fill="#ff1050" opacity="0.85"/><rect x="449" y="440" width="8" height="1" fill="#ff1050" opacity="0.85"/><rect x="602" y="433" width="6" height="1" fill="#008000"/><rect x="610" y="433" width="6" height="1" fill="#008000"/><rect x="225" y="472" width="8" height="1" fill="#000000" opacity="0.85"/><rect x="377" y="504" width="8" height="1" fill="#000000" opacity="0.85"/><rect x="273" y="520" width="8" height="1" fill="#000000" opacity="0.85"/><rect x="321" y="520" width="8" height="1" fill="#000000" opacity="0.85"/><rect x="425" y="520" width="8" height="1" fill="#ff1050" opacity="0.85"/><rect x="473" y="520" width="8" height="1" fill="#ff1050" opacity="0.85"/><rect x="714" y="513" width="6" height="1" fill="#008000"/><rect x="722" y="513" width="6" height="1" fill="#008000"/><rect x="281" y="536" width="8" height="1" fill="#000000" opacity="0.85"/><rect x="329" y="536" width="8" height="1" fill="#000000" opacity="0.85"/><rect x="425" y="536" width="8" height="1" fill="#ff1050" opacity="0.85"/><rect x="473" y="536" width="8" height="1" fill="#ff1050" opacity="0.85"/><rect x="297" y="552" width="8" height="1" fill="#000000" opacity="0.85"/><rect x="345" y="552" width="8" height="1" fill="#000000" opacity="0.85"/><rect x="425" y="552" width="8" height="1" fill="#ff1050" opacity="0.85"/><rect x="473" y="552" width="8" height="1" fill="#ff1050" opacity="0.85"/><rect x="425" y="568" width="8" height="1" fill="#ff1050" opacity="0.85"/><rect x="473" y="568" width="8" height="1" fill="#ff1050" opacity="0.85"/><rect x="265" y="584" width="8" height="1" fill="#000000" opacity="0.85"/><rect x="329" y="584" width="8" height="1" fill="#000000" opacity="0.85"/><rect x="425" y="584" width="8" height="1" fill="#ff1050" opacity="0.85"/><rect x="434" y="593" width="6" height="1" fill="#008000"/><rect x="442" y="593" width="6" height="1" fill="#008000"/></svg></body></html>
